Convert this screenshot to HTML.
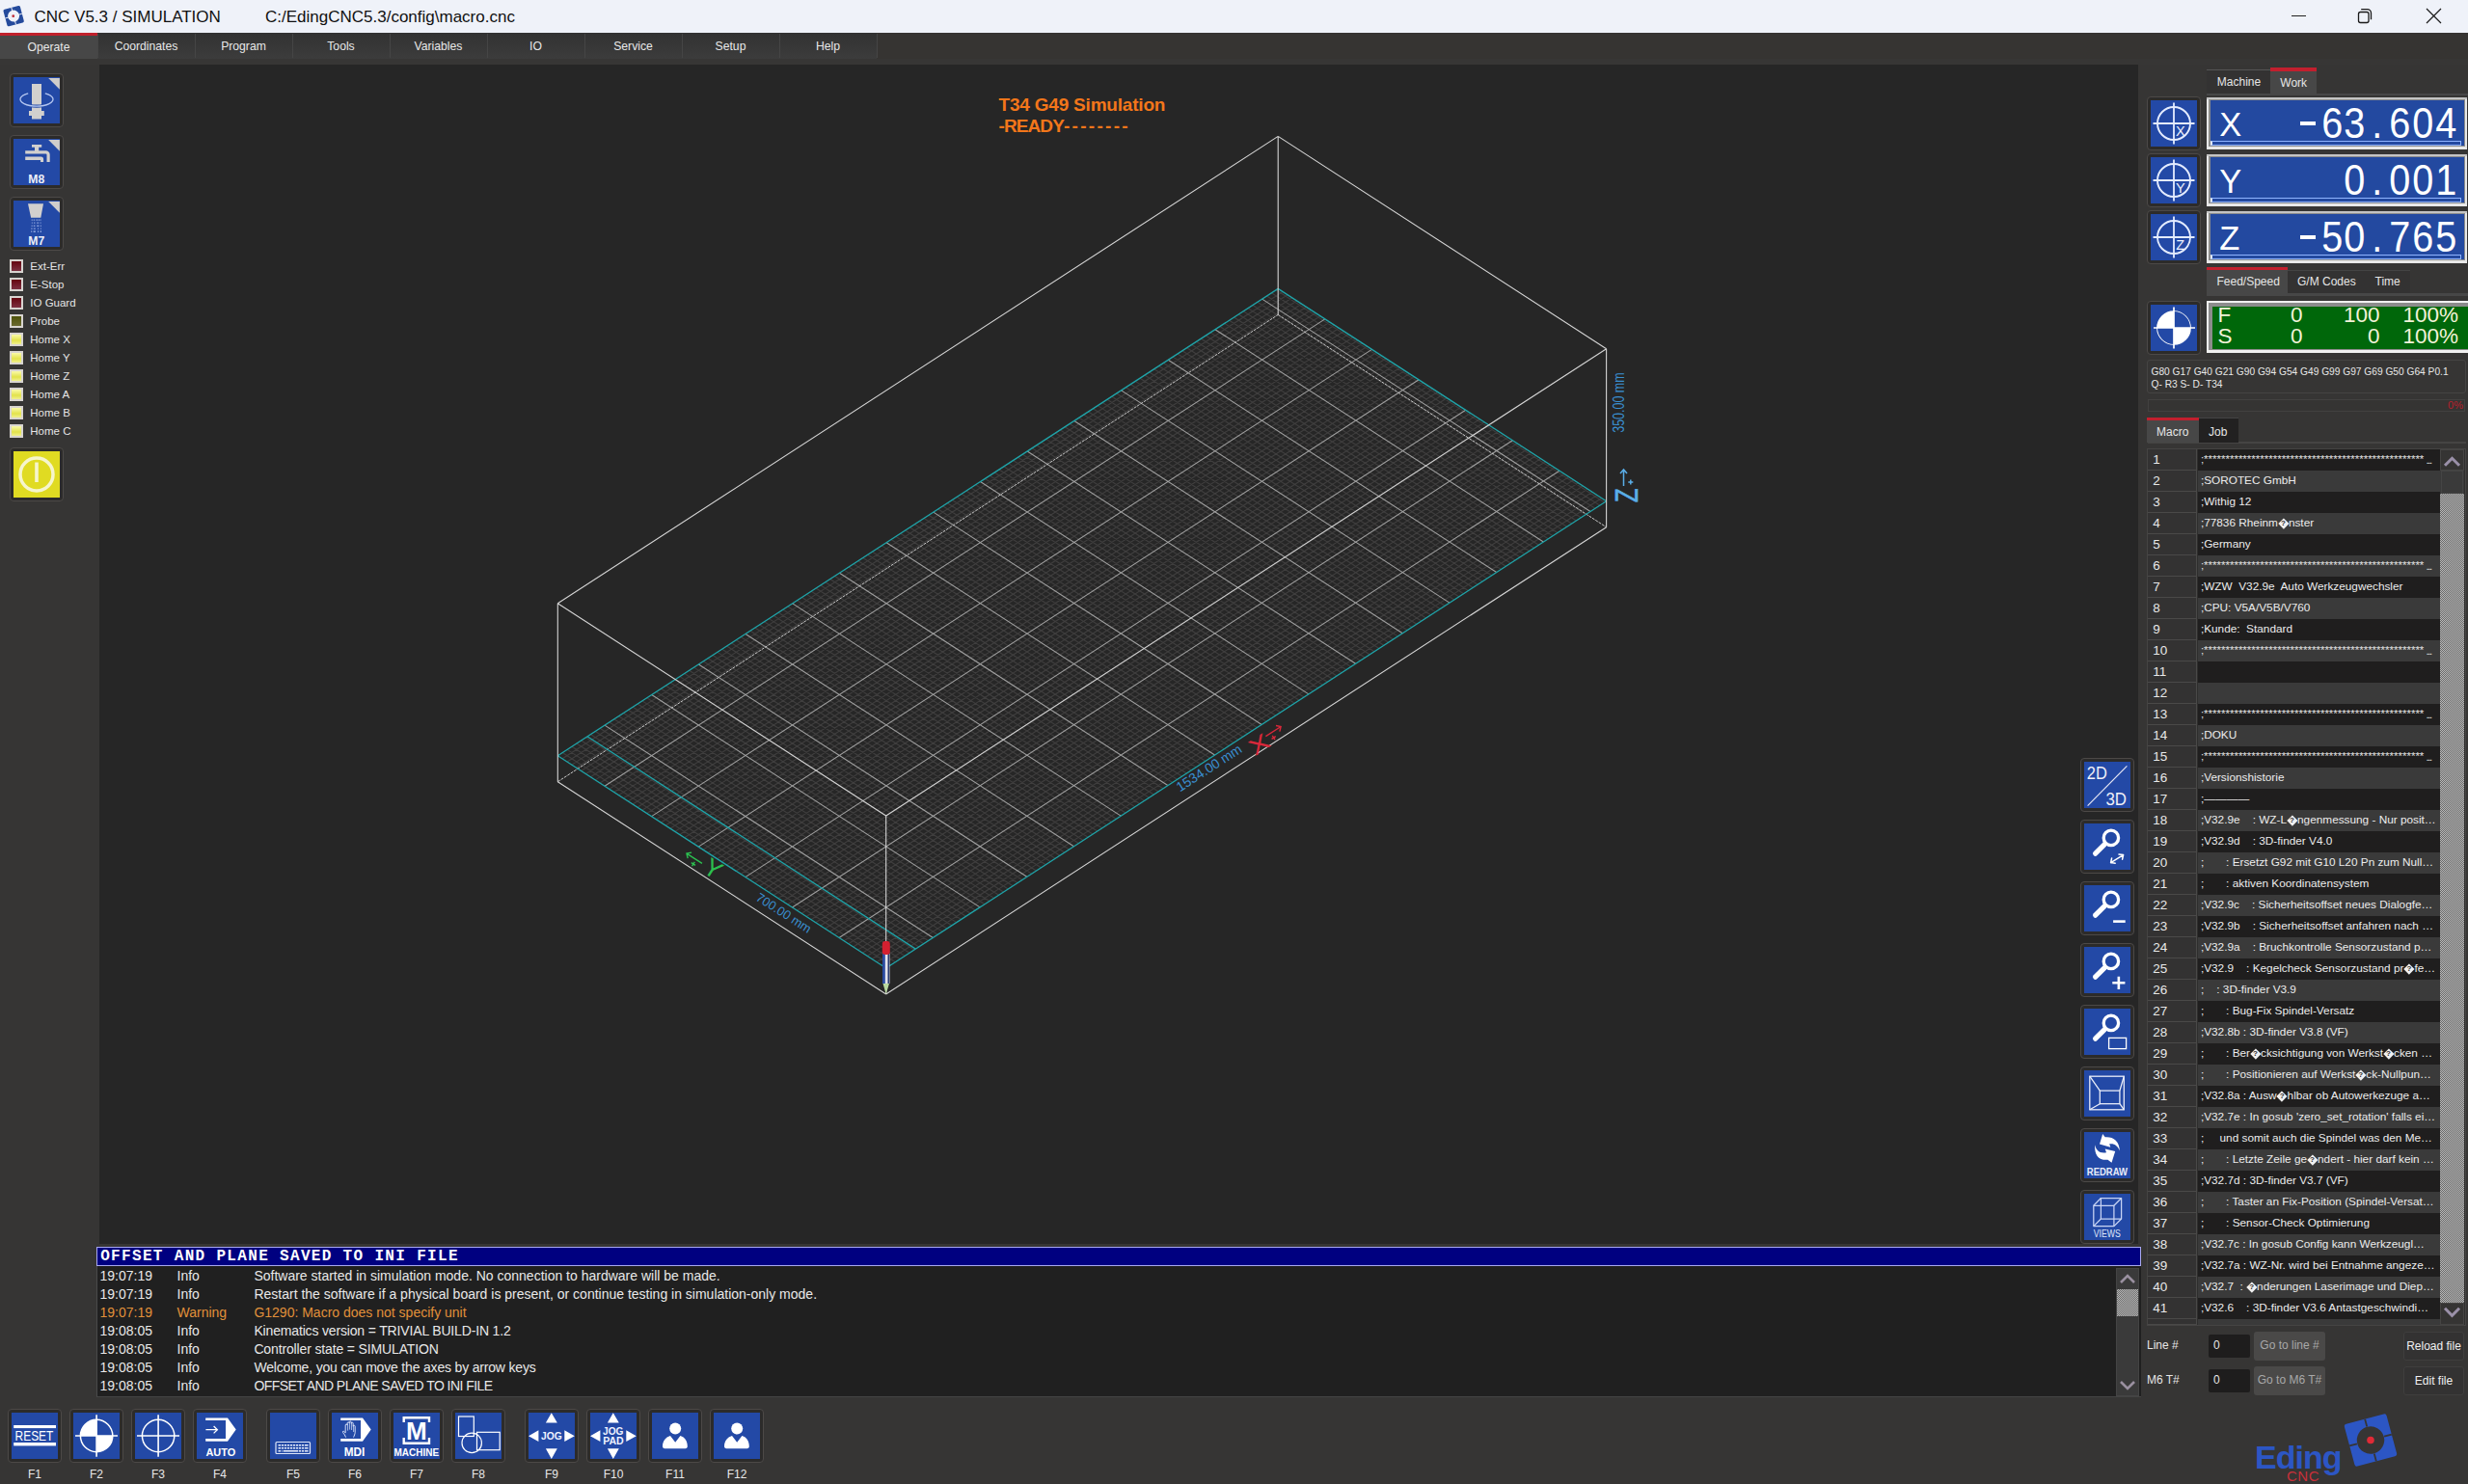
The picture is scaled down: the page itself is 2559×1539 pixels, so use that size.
<!DOCTYPE html><html><head><meta charset="utf-8"><title>CNC</title><style>
*{margin:0;padding:0;box-sizing:border-box}
html,body{width:2559px;height:1539px;overflow:hidden;background:#363534;font-family:"Liberation Sans",sans-serif}
.t{position:absolute;white-space:pre}
.b{position:absolute}
.btn{position:absolute;width:56px;height:56px;border:1px solid #4c4947;border-radius:4px;background:#2c2b2a}
.btn .in{position:absolute;left:3px;top:3px;width:48px;height:48px;background:#2349a6;overflow:hidden}
.btn svg{position:absolute;left:0;top:0}
.q{display:inline-block;position:relative;width:11px;height:10px;vertical-align:1px;color:#2a2a2a;font-size:8px;font-weight:bold;line-height:10px;text-align:center}.q::before{content:"";position:absolute;left:1.6px;top:1.1px;width:7.8px;height:7.8px;background:#f0f0f0;transform:rotate(45deg);z-index:-0}.q b{position:relative}</style></head><body>
<div class="b" style="left:0px;top:61px;width:103px;height:1400px;background:#363534"></div>
<div class="btn" style="left:10px;top:76px"><div class="in" style="background:#2349a6"><svg width="48" height="48" viewBox="0 0 48 48"><path d="M36.2 1.1H47.9V12.8Z" fill="#cfcdcb"/><path d="M19 7.1h10v28h2.8v5H29v3.5H19V40h-3v-5h3z" fill="#d2d0ce"/>
<path d="M15.2 16.8A17 7.2 0 1 0 32.8 16.8" fill="none" stroke="#2349a6" stroke-width="3.2"/>
<path d="M15.2 16.8A17 7.2 0 1 0 32.8 16.8" fill="none" stroke="#b4c6f0" stroke-width="1.3"/></svg></div></div>
<div class="btn" style="left:10px;top:140px"><div class="in" style="background:#2349a6"><svg width="48" height="48" viewBox="0 0 48 48"><path d="M36.2 1.1H47.9V12.8Z" fill="#cfcdcb"/><path d="M19 6h10.2v2.8H26.2V12.2h7.3a4.2 4.2 0 0 1 4.2 4.2V24h-3.2v-7.4a1 1 0 0 0-1-1H12.2v-3.4H22V8.8h-3z" fill="#d2d0ce"/>
<path d="M12.2 18.6h16.2a2.7 2.7 0 0 1 2.7 2.7V24H28v-2h-15.8z" fill="#d2d0ce"/>
<text x="23.8" y="45.8" font-family="Liberation Sans" font-weight="bold" font-size="12.2" fill="#eceef8" text-anchor="middle">M8</text></svg></div></div>
<div class="btn" style="left:10px;top:204px"><div class="in" style="background:#2349a6"><svg width="48" height="48" viewBox="0 0 48 48"><path d="M36.2 1.1H47.9V12.8Z" fill="#cfcdcb"/><path d="M15 3.2h16l-2.7 14.5H18.1z" fill="#d2d0ce"/>
<g fill="#9fb2e6"><rect x="18.6" y="19.6" width="1.2" height="1" /><rect x="20.6" y="19.6" width="1.6" height="1"/><rect x="23.4" y="19.6" width="1.6" height="1"/><rect x="25.6" y="19.6" width="1.6" height="1"/><rect x="27.6" y="19.6" width="1" height="1"/>
<rect x="18.8" y="22.6" width="1" height="1"/><rect x="21" y="22.6" width="1.4" height="1"/><rect x="24.2" y="22.6" width="2" height="1"/><rect x="27.6" y="22.6" width="1" height="1"/>
<rect x="18.6" y="25.6" width="1" height="1.2"/><rect x="20.8" y="25.6" width="1.6" height="1.2"/><rect x="24.2" y="25.6" width="2.2" height="1.2"/><rect x="27.8" y="25.6" width="1" height="1.2"/>
<rect x="18.2" y="28.6" width="1.4" height="1"/><rect x="20.8" y="28.6" width="2" height="1"/><rect x="25" y="28.6" width="1" height="1"/><rect x="27.8" y="28.6" width="1" height="1"/>
<rect x="18.2" y="31.4" width="1" height="1.4"/><rect x="20.6" y="31.4" width="2.2" height="1.4"/><rect x="25" y="31.4" width="1" height="1.4"/><rect x="27.6" y="31.4" width="1.4" height="1.4"/></g>
<text x="23.8" y="45.6" font-family="Liberation Sans" font-weight="bold" font-size="12.2" fill="#eceef8" text-anchor="middle">M7</text></svg></div></div>
<div class="b" style="left:10px;top:269px;width:14px;height:14px;background:linear-gradient(#660610,#7c3040);border:2px solid #d8d4d0"></div>
<div class="t" style="left:31.3px;top:270.9px;font-size:11.5px;line-height:11.5px;color:#e4e4e4;font-weight:normal;font-family:'Liberation Sans', sans-serif;">Ext-Err</div>
<div class="b" style="left:10px;top:288px;width:14px;height:14px;background:linear-gradient(#660610,#7c3040);border:2px solid #d8d4d0"></div>
<div class="t" style="left:31.3px;top:289.9px;font-size:11.5px;line-height:11.5px;color:#e4e4e4;font-weight:normal;font-family:'Liberation Sans', sans-serif;">E-Stop</div>
<div class="b" style="left:10px;top:307px;width:14px;height:14px;background:linear-gradient(#660610,#7c3040);border:2px solid #d8d4d0"></div>
<div class="t" style="left:31.3px;top:308.9px;font-size:11.5px;line-height:11.5px;color:#e4e4e4;font-weight:normal;font-family:'Liberation Sans', sans-serif;">IO Guard</div>
<div class="b" style="left:10px;top:326px;width:14px;height:14px;background:linear-gradient(#4e5208,#6a6830);border:2px solid #d8d4d0"></div>
<div class="t" style="left:31.3px;top:327.9px;font-size:11.5px;line-height:11.5px;color:#e4e4e4;font-weight:normal;font-family:'Liberation Sans', sans-serif;">Probe</div>
<div class="b" style="left:10px;top:345px;width:14px;height:14px;background:linear-gradient(#fafaa8,#e2e24a 60%,#f0f090);border:2px solid #d8d4d0"></div>
<div class="t" style="left:31.3px;top:346.9px;font-size:11.5px;line-height:11.5px;color:#e4e4e4;font-weight:normal;font-family:'Liberation Sans', sans-serif;">Home X</div>
<div class="b" style="left:10px;top:364px;width:14px;height:14px;background:linear-gradient(#fafaa8,#e2e24a 60%,#f0f090);border:2px solid #d8d4d0"></div>
<div class="t" style="left:31.3px;top:365.9px;font-size:11.5px;line-height:11.5px;color:#e4e4e4;font-weight:normal;font-family:'Liberation Sans', sans-serif;">Home Y</div>
<div class="b" style="left:10px;top:383px;width:14px;height:14px;background:linear-gradient(#fafaa8,#e2e24a 60%,#f0f090);border:2px solid #d8d4d0"></div>
<div class="t" style="left:31.3px;top:384.9px;font-size:11.5px;line-height:11.5px;color:#e4e4e4;font-weight:normal;font-family:'Liberation Sans', sans-serif;">Home Z</div>
<div class="b" style="left:10px;top:402px;width:14px;height:14px;background:linear-gradient(#fafaa8,#e2e24a 60%,#f0f090);border:2px solid #d8d4d0"></div>
<div class="t" style="left:31.3px;top:403.9px;font-size:11.5px;line-height:11.5px;color:#e4e4e4;font-weight:normal;font-family:'Liberation Sans', sans-serif;">Home A</div>
<div class="b" style="left:10px;top:421px;width:14px;height:14px;background:linear-gradient(#fafaa8,#e2e24a 60%,#f0f090);border:2px solid #d8d4d0"></div>
<div class="t" style="left:31.3px;top:422.9px;font-size:11.5px;line-height:11.5px;color:#e4e4e4;font-weight:normal;font-family:'Liberation Sans', sans-serif;">Home B</div>
<div class="b" style="left:10px;top:440px;width:14px;height:14px;background:linear-gradient(#fafaa8,#e2e24a 60%,#f0f090);border:2px solid #d8d4d0"></div>
<div class="t" style="left:31.3px;top:441.9px;font-size:11.5px;line-height:11.5px;color:#e4e4e4;font-weight:normal;font-family:'Liberation Sans', sans-serif;">Home C</div>
<div class="btn" style="left:10px;top:464px"><div class="in" style="background:#e0db22">
<svg width="48" height="48" viewBox="0 0 48 48"><circle cx="24" cy="24" r="17" fill="none" stroke="#f6f5cc" stroke-width="3.5"/>
<rect x="22.2" y="11.5" width="3.6" height="20.5" fill="#f6f5cc"/></svg></div></div>
<div class="b" style="left:2217px;top:61px;width:342px;height:1478px;background:#363534"></div>
<div class="b" style="left:2288px;top:97px;width:271px;height:2px;background:#474747"></div>
<div class="b" style="left:2288px;top:72px;width:66px;height:25px;background:#333232;border-top:1px solid #555"></div>
<div class="t" style="left:2298.8px;top:78.6px;font-size:12px;line-height:12px;color:#e6e6e6;font-weight:normal;font-family:'Liberation Sans', sans-serif;">Machine</div>
<div class="b" style="left:2354px;top:74px;width:48px;height:25px;background:#474747"></div>
<div class="b" style="left:2354px;top:70px;width:48px;height:4px;background:#c21f2e"></div>
<div class="t" style="left:2364.3px;top:79.5px;font-size:12px;line-height:12px;color:#e6e6e6;font-weight:normal;font-family:'Liberation Sans', sans-serif;">Work</div>
<div class="btn" style="left:2226px;top:100px"><div class="in" style="background:#2349a6"><svg width="48" height="48" viewBox="0 0 48 48"><circle cx="24" cy="24" r="17" fill="none" stroke="#e4ecff" stroke-width="1.9"/><path d="M24 2.5v43M2.5 24h43" stroke="#e4ecff" stroke-width="1.8"/><text x="30.8" y="37" font-family="Liberation Sans" font-size="14.5" fill="#eef2ff" text-anchor="middle">X</text></svg></div></div>
<div class="b" style="left:2288px;top:101px;width:270px;height:54px;background:#e8e8e8"></div>
<div class="b" style="left:2288px;top:101px;width:270px;height:2px;background:#c4c4c4"></div>
<div class="b" style="left:2290px;top:103px;width:266px;height:49px;background:#8c8c8c"></div>
<div class="b" style="left:2292px;top:104px;width:263px;height:47px;background:#2349a0"></div>
<div class="b" style="left:2292px;top:146px;width:260px;height:5px;border:1px solid #8fb4ff;border-left:2px solid #e0e8ff"></div>
<div class="t" style="left:2301.2px;top:111.5px;font-size:34.5px;line-height:34.5px;color:#ffffff;font-weight:normal;font-family:'Liberation Sans', sans-serif;">X</div>
<div class="b" style="left:2385.0px;top:125.6px;width:16.3px;height:4.2px;background:#fff"></div>
<div class="t" style="left:2405.7px;top:105.9px;font-size:44px;line-height:44px;color:#ffffff;font-weight:normal;font-family:'Liberation Sans', sans-serif;width:23.56px;text-align:center;transform:scaleX(0.9)">6</div>
<div class="t" style="left:2429.3px;top:105.9px;font-size:44px;line-height:44px;color:#ffffff;font-weight:normal;font-family:'Liberation Sans', sans-serif;width:23.56px;text-align:center;transform:scaleX(0.9)">3</div>
<div class="t" style="left:2452.9px;top:105.9px;font-size:44px;line-height:44px;color:#ffffff;font-weight:normal;font-family:'Liberation Sans', sans-serif;width:23.56px;text-align:center;transform:scaleX(0.9)">.</div>
<div class="t" style="left:2476.4px;top:105.9px;font-size:44px;line-height:44px;color:#ffffff;font-weight:normal;font-family:'Liberation Sans', sans-serif;width:23.56px;text-align:center;transform:scaleX(0.9)">6</div>
<div class="t" style="left:2500.0px;top:105.9px;font-size:44px;line-height:44px;color:#ffffff;font-weight:normal;font-family:'Liberation Sans', sans-serif;width:23.56px;text-align:center;transform:scaleX(0.9)">0</div>
<div class="t" style="left:2523.5px;top:105.9px;font-size:44px;line-height:44px;color:#ffffff;font-weight:normal;font-family:'Liberation Sans', sans-serif;width:23.56px;text-align:center;transform:scaleX(0.9)">4</div>
<div class="btn" style="left:2226px;top:159px"><div class="in" style="background:#2349a6"><svg width="48" height="48" viewBox="0 0 48 48"><circle cx="24" cy="24" r="17" fill="none" stroke="#e4ecff" stroke-width="1.9"/><path d="M24 2.5v43M2.5 24h43" stroke="#e4ecff" stroke-width="1.8"/><text x="30.8" y="37" font-family="Liberation Sans" font-size="14.5" fill="#eef2ff" text-anchor="middle">Y</text></svg></div></div>
<div class="b" style="left:2288px;top:160px;width:270px;height:54px;background:#e8e8e8"></div>
<div class="b" style="left:2288px;top:160px;width:270px;height:2px;background:#c4c4c4"></div>
<div class="b" style="left:2290px;top:162px;width:266px;height:49px;background:#8c8c8c"></div>
<div class="b" style="left:2292px;top:163px;width:263px;height:47px;background:#2349a0"></div>
<div class="b" style="left:2292px;top:205px;width:260px;height:5px;border:1px solid #8fb4ff;border-left:2px solid #e0e8ff"></div>
<div class="t" style="left:2301.2px;top:170.5px;font-size:34.5px;line-height:34.5px;color:#ffffff;font-weight:normal;font-family:'Liberation Sans', sans-serif;">Y</div>
<div class="t" style="left:2429.3px;top:164.9px;font-size:44px;line-height:44px;color:#ffffff;font-weight:normal;font-family:'Liberation Sans', sans-serif;width:23.56px;text-align:center;transform:scaleX(0.9)">0</div>
<div class="t" style="left:2452.9px;top:164.9px;font-size:44px;line-height:44px;color:#ffffff;font-weight:normal;font-family:'Liberation Sans', sans-serif;width:23.56px;text-align:center;transform:scaleX(0.9)">.</div>
<div class="t" style="left:2476.4px;top:164.9px;font-size:44px;line-height:44px;color:#ffffff;font-weight:normal;font-family:'Liberation Sans', sans-serif;width:23.56px;text-align:center;transform:scaleX(0.9)">0</div>
<div class="t" style="left:2500.0px;top:164.9px;font-size:44px;line-height:44px;color:#ffffff;font-weight:normal;font-family:'Liberation Sans', sans-serif;width:23.56px;text-align:center;transform:scaleX(0.9)">0</div>
<div class="t" style="left:2523.5px;top:164.9px;font-size:44px;line-height:44px;color:#ffffff;font-weight:normal;font-family:'Liberation Sans', sans-serif;width:23.56px;text-align:center;transform:scaleX(0.9)">1</div>
<div class="btn" style="left:2226px;top:218px"><div class="in" style="background:#2349a6"><svg width="48" height="48" viewBox="0 0 48 48"><circle cx="24" cy="24" r="17" fill="none" stroke="#e4ecff" stroke-width="1.9"/><path d="M24 2.5v43M2.5 24h43" stroke="#e4ecff" stroke-width="1.8"/><text x="30.8" y="37" font-family="Liberation Sans" font-size="14.5" fill="#eef2ff" text-anchor="middle">Z</text></svg></div></div>
<div class="b" style="left:2288px;top:219px;width:270px;height:54px;background:#e8e8e8"></div>
<div class="b" style="left:2288px;top:219px;width:270px;height:2px;background:#c4c4c4"></div>
<div class="b" style="left:2290px;top:221px;width:266px;height:49px;background:#8c8c8c"></div>
<div class="b" style="left:2292px;top:222px;width:263px;height:47px;background:#2349a0"></div>
<div class="b" style="left:2292px;top:264px;width:260px;height:5px;border:1px solid #8fb4ff;border-left:2px solid #e0e8ff"></div>
<div class="t" style="left:2301.2px;top:229.5px;font-size:34.5px;line-height:34.5px;color:#ffffff;font-weight:normal;font-family:'Liberation Sans', sans-serif;">Z</div>
<div class="b" style="left:2385.0px;top:243.6px;width:16.3px;height:4.2px;background:#fff"></div>
<div class="t" style="left:2405.7px;top:223.9px;font-size:44px;line-height:44px;color:#ffffff;font-weight:normal;font-family:'Liberation Sans', sans-serif;width:23.56px;text-align:center;transform:scaleX(0.9)">5</div>
<div class="t" style="left:2429.3px;top:223.9px;font-size:44px;line-height:44px;color:#ffffff;font-weight:normal;font-family:'Liberation Sans', sans-serif;width:23.56px;text-align:center;transform:scaleX(0.9)">0</div>
<div class="t" style="left:2452.9px;top:223.9px;font-size:44px;line-height:44px;color:#ffffff;font-weight:normal;font-family:'Liberation Sans', sans-serif;width:23.56px;text-align:center;transform:scaleX(0.9)">.</div>
<div class="t" style="left:2476.4px;top:223.9px;font-size:44px;line-height:44px;color:#ffffff;font-weight:normal;font-family:'Liberation Sans', sans-serif;width:23.56px;text-align:center;transform:scaleX(0.9)">7</div>
<div class="t" style="left:2500.0px;top:223.9px;font-size:44px;line-height:44px;color:#ffffff;font-weight:normal;font-family:'Liberation Sans', sans-serif;width:23.56px;text-align:center;transform:scaleX(0.9)">6</div>
<div class="t" style="left:2523.5px;top:223.9px;font-size:44px;line-height:44px;color:#ffffff;font-weight:normal;font-family:'Liberation Sans', sans-serif;width:23.56px;text-align:center;transform:scaleX(0.9)">5</div>
<div class="b" style="left:2288px;top:304px;width:271px;height:3px;background:#474747"></div>
<div class="b" style="left:2372px;top:280px;width:127px;height:24px;background:#333232;border-top:1px solid #444"></div>
<div class="b" style="left:2288px;top:280px;width:84px;height:26px;background:#474747"></div>
<div class="b" style="left:2288px;top:276.5px;width:84px;height:3.5px;background:#c21f2e"></div>
<div class="t" style="left:2298.5px;top:286.4px;font-size:12px;line-height:12px;color:#e6e6e6;font-weight:normal;font-family:'Liberation Sans', sans-serif;">Feed/Speed</div>
<div class="t" style="left:2382.0px;top:285.9px;font-size:12px;line-height:12px;color:#e6e6e6;font-weight:normal;font-family:'Liberation Sans', sans-serif;">G/M Codes</div>
<div class="t" style="left:2462.5px;top:285.9px;font-size:12px;line-height:12px;color:#e6e6e6;font-weight:normal;font-family:'Liberation Sans', sans-serif;">Time</div>
<div class="btn" style="left:2226px;top:312px"><div class="in" style="background:#2349a6"><svg width="48" height="48" viewBox="0 0 48 48"><circle cx="24" cy="24" r="17" fill="#fff" stroke="#fff" stroke-width="1.7"/>
<path d="M24 24H41A17 17 0 0 0 24 7Z" fill="#2349a6"/><path d="M24 24H7A17 17 0 0 0 24 41Z" fill="#2349a6"/>
<path d="M24 2.5v43M3 24h43" stroke="#fff" stroke-width="1.7"/></svg></div></div>
<div class="b" style="left:2288px;top:312px;width:271px;height:54px;background:#f0f0f0"></div>
<div class="b" style="left:2290px;top:314px;width:269px;height:49px;background:#8c8c8c"></div>
<div class="b" style="left:2294px;top:318px;width:265px;height:44px;background:#00670a"></div>
<div class="t" style="left:2299.6px;top:316.4px;font-size:22.5px;line-height:22.5px;color:#f2f2d8;font-weight:normal;font-family:'Liberation Sans', sans-serif;">F</div>
<div class="t" style="left:2287.6px;top:316.4px;font-size:22.5px;line-height:22.5px;color:#f2f2d8;font-weight:normal;font-family:'Liberation Sans', sans-serif;width:100px;text-align:right">0</div>
<div class="t" style="left:2367.6px;top:316.4px;font-size:22.5px;line-height:22.5px;color:#f2f2d8;font-weight:normal;font-family:'Liberation Sans', sans-serif;width:100px;text-align:right">100</div>
<div class="t" style="left:2449.0px;top:316.4px;font-size:22.5px;line-height:22.5px;color:#f2f2d8;font-weight:normal;font-family:'Liberation Sans', sans-serif;width:100px;text-align:right">100%</div>
<div class="t" style="left:2299.6px;top:338.0px;font-size:22.5px;line-height:22.5px;color:#f2f2d8;font-weight:normal;font-family:'Liberation Sans', sans-serif;">S</div>
<div class="t" style="left:2287.6px;top:338.0px;font-size:22.5px;line-height:22.5px;color:#f2f2d8;font-weight:normal;font-family:'Liberation Sans', sans-serif;width:100px;text-align:right">0</div>
<div class="t" style="left:2367.6px;top:338.0px;font-size:22.5px;line-height:22.5px;color:#f2f2d8;font-weight:normal;font-family:'Liberation Sans', sans-serif;width:100px;text-align:right">0</div>
<div class="t" style="left:2449.0px;top:338.0px;font-size:22.5px;line-height:22.5px;color:#f2f2d8;font-weight:normal;font-family:'Liberation Sans', sans-serif;width:100px;text-align:right">100%</div>
<div class="b" style="left:2226px;top:373px;width:331px;height:35px;border:1px solid #454443;border-radius:3px"></div>
<div class="t" style="left:2230.5px;top:381.2px;font-size:10.2px;line-height:10.2px;color:#e8e8e8;font-weight:normal;font-family:'Liberation Sans', sans-serif;">G80 G17 G40 G21 G90 G94 G54 G49 G99 G97 G69 G50 G64 P0.1</div>
<div class="t" style="left:2230.5px;top:394.2px;font-size:10.2px;line-height:10.2px;color:#e8e8e8;font-weight:normal;font-family:'Liberation Sans', sans-serif;">Q- R3 S- D- T34</div>
<div class="b" style="left:2227px;top:414px;width:329px;height:13px;border:1px solid #424140;background:#353433"></div>
<div class="t" style="left:2454.0px;top:414.6px;font-size:11px;line-height:11px;color:#b8202c;font-weight:normal;font-family:'Liberation Sans', sans-serif;width:100px;text-align:right">0%</div>
<div class="b" style="left:2227px;top:458px;width:330px;height:2px;background:#454443"></div>
<div class="b" style="left:2226px;top:436px;width:54px;height:23px;background:#474747"></div>
<div class="b" style="left:2226px;top:432.5px;width:54px;height:3.5px;background:#c21f2e"></div>
<div class="b" style="left:2280px;top:433px;width:41px;height:26px;background:#222121;border-top:1px solid #444"></div>
<div class="t" style="left:2236.0px;top:441.9px;font-size:12px;line-height:12px;color:#e6e6e6;font-weight:normal;font-family:'Liberation Sans', sans-serif;">Macro</div>
<div class="t" style="left:2290.0px;top:441.7px;font-size:12px;line-height:12px;color:#e6e6e6;font-weight:normal;font-family:'Liberation Sans', sans-serif;">Job</div>
<div class="b" style="left:103px;top:67px;width:2114px;height:1223px;background:#262626"></div>
<svg class="b" style="left:103px;top:67px" width="2114" height="1223" viewBox="103 67 2114 1223">
<path d="M923.57 1000.84L583.17 780.54M928.44 997.69L588.04 777.39M933.31 994.53L592.91 774.23M938.18 991.37L597.78 771.07M943.04 988.21L602.64 767.91M947.91 985.06L607.51 764.76M952.78 981.90L612.38 761.60M957.65 978.74L617.25 758.44M962.52 975.59L622.12 755.29M972.26 969.27L631.86 748.97M977.13 966.11L636.73 745.81M982.00 962.96L641.60 742.66M986.87 959.80L646.47 739.50M991.73 956.64L651.33 736.34M996.60 953.49L656.20 733.19M1001.47 950.33L661.07 730.03M1006.34 947.17L665.94 726.87M1011.21 944.01L670.81 723.71M1020.95 937.70L680.55 717.40M1025.82 934.54L685.42 714.24M1030.69 931.39L690.29 711.09M1035.56 928.23L695.16 707.93M1040.42 925.07L700.02 704.77M1045.29 921.92L704.89 701.62M1050.16 918.76L709.76 698.46M1055.03 915.60L714.63 695.30M1059.90 912.44L719.50 692.14M1069.64 906.13L729.24 685.83M1074.51 902.97L734.11 682.67M1079.38 899.82L738.98 679.52M1084.24 896.66L743.84 676.36M1089.11 893.50L748.71 673.20M1093.98 890.34L753.58 670.04M1098.85 887.19L758.45 666.89M1103.72 884.03L763.32 663.73M1108.59 880.87L768.19 660.57M1118.33 874.56L777.93 654.26M1123.20 871.40L782.80 651.10M1128.07 868.24L787.67 647.94M1132.93 865.09L792.53 644.79M1137.80 861.93L797.40 641.63M1142.67 858.77L802.27 638.47M1147.54 855.62L807.14 635.32M1152.41 852.46L812.01 632.16M1157.28 849.30L816.88 629.00M1167.02 842.99L826.62 622.69M1171.89 839.83L831.49 619.53M1176.76 836.67L836.36 616.37M1181.62 833.52L841.22 613.22M1186.49 830.36L846.09 610.06M1191.36 827.20L850.96 606.90M1196.23 824.04L855.83 603.74M1201.10 820.89L860.70 600.59M1205.97 817.73L865.57 597.43M1215.71 811.42L875.31 591.12M1220.58 808.26L880.18 587.96M1225.45 805.10L885.05 584.80M1230.31 801.95L889.91 581.65M1235.18 798.79L894.78 578.49M1240.05 795.63L899.65 575.33M1244.92 792.47L904.52 572.17M1249.79 789.32L909.39 569.02M1254.66 786.16L914.26 565.86M1264.40 779.85L924.00 559.55M1269.27 776.69L928.87 556.39M1274.13 773.53L933.73 553.23M1279.00 770.37L938.60 550.07M1283.87 767.22L943.47 546.92M1288.74 764.06L948.34 543.76M1293.61 760.90L953.21 540.60M1298.48 757.75L958.08 537.45M1303.35 754.59L962.95 534.29M1313.09 748.27L972.69 527.97M1317.96 745.12L977.56 524.82M1322.82 741.96L982.42 521.66M1327.69 738.80L987.29 518.50M1332.56 735.65L992.16 515.35M1337.43 732.49L997.03 512.19M1342.30 729.33L1001.90 509.03M1347.17 726.17L1006.77 505.87M1352.04 723.02L1011.64 502.72M1361.78 716.70L1021.38 496.40M1366.65 713.55L1026.25 493.25M1371.51 710.39L1031.11 490.09M1376.38 707.23L1035.98 486.93M1381.25 704.07L1040.85 483.77M1386.12 700.92L1045.72 480.62M1390.99 697.76L1050.59 477.46M1395.86 694.60L1055.46 474.30M1400.73 691.45L1060.33 471.15M1410.47 685.13L1070.07 464.83M1415.33 681.98L1074.93 461.68M1420.20 678.82L1079.80 458.52M1425.07 675.66L1084.67 455.36M1429.94 672.50L1089.54 452.20M1434.81 669.35L1094.41 449.05M1439.68 666.19L1099.28 445.89M1444.55 663.03L1104.15 442.73M1449.42 659.88L1109.02 439.58M1459.16 653.56L1118.76 433.26M1464.02 650.40L1123.62 430.10M1468.89 647.25L1128.49 426.95M1473.76 644.09L1133.36 423.79M1478.63 640.93L1138.23 420.63M1483.50 637.78L1143.10 417.48M1488.37 634.62L1147.97 414.32M1493.24 631.46L1152.84 411.16M1498.11 628.30L1157.71 408.00M1507.85 621.99L1167.45 401.69M1512.71 618.83L1172.31 398.53M1517.58 615.68L1177.18 395.38M1522.45 612.52L1182.05 392.22M1527.32 609.36L1186.92 389.06M1532.19 606.20L1191.79 385.90M1537.06 603.05L1196.66 382.75M1541.93 599.89L1201.53 379.59M1546.80 596.73L1206.40 376.43M1556.54 590.42L1216.14 370.12M1561.40 587.26L1221.00 366.96M1566.27 584.10L1225.87 363.80M1571.14 580.95L1230.74 360.65M1576.01 577.79L1235.61 357.49M1580.88 574.63L1240.48 354.33M1585.75 571.48L1245.35 351.18M1590.62 568.32L1250.22 348.02M1595.49 565.16L1255.09 344.86M1605.22 558.85L1264.82 338.55M1610.09 555.69L1269.69 335.39M1614.96 552.53L1274.56 332.23M1619.83 549.38L1279.43 329.08M1624.70 546.22L1284.30 325.92M1629.57 543.06L1289.17 322.76M1634.44 539.91L1294.04 319.61M1639.31 536.75L1298.91 316.45M1644.18 533.59L1303.78 313.29M1653.91 527.28L1313.51 306.98M1658.78 524.12L1318.38 303.82M1663.65 520.96L1323.25 300.66M913.84 1000.85L1660.74 516.55M908.97 997.71L1655.87 513.41M904.11 994.56L1651.01 510.26M899.25 991.41L1646.15 507.11M894.39 988.26L1641.29 503.96M889.52 985.12L1636.42 500.82M884.66 981.97L1631.56 497.67M879.80 978.82L1626.70 494.52M874.93 975.68L1621.83 491.38M865.21 969.38L1612.11 485.08M860.35 966.23L1607.25 481.93M855.48 963.09L1602.38 478.79M850.62 959.94L1597.52 475.64M845.76 956.79L1592.66 472.49M840.89 953.65L1587.79 469.35M836.03 950.50L1582.93 466.20M831.17 947.35L1578.07 463.05M826.31 944.20L1573.21 459.90M816.58 937.91L1563.48 453.61M811.72 934.76L1558.62 450.46M806.85 931.62L1553.75 447.32M801.99 928.47L1548.89 444.17M797.13 925.32L1544.03 441.02M792.27 922.17L1539.17 437.87M787.40 919.03L1534.30 434.73M782.54 915.88L1529.44 431.58M777.68 912.73L1524.58 428.43M767.95 906.44L1514.85 422.14M763.09 903.29L1509.99 418.99M758.23 900.14L1505.13 415.84M753.36 897.00L1500.26 412.70M748.50 893.85L1495.40 409.55M743.64 890.70L1490.54 406.40M738.77 887.56L1485.67 403.26M733.91 884.41L1480.81 400.11M729.05 881.26L1475.95 396.96M719.32 874.97L1466.22 390.67M714.46 871.82L1461.36 387.52M709.60 868.67L1456.50 384.37M704.73 865.53L1451.63 381.23M699.87 862.38L1446.77 378.08M695.01 859.23L1441.91 374.93M690.15 856.08L1437.05 371.78M685.28 852.94L1432.18 368.64M680.42 849.79L1427.32 365.49M670.69 843.50L1417.59 359.20M665.83 840.35L1412.73 356.05M660.97 837.20L1407.87 352.90M656.11 834.05L1403.01 349.75M651.24 830.91L1398.14 346.61M646.38 827.76L1393.28 343.46M641.52 824.61L1388.42 340.31M636.65 821.47L1383.55 337.17M631.79 818.32L1378.69 334.02M622.07 812.02L1368.97 327.72M617.20 808.88L1364.10 324.58M612.34 805.73L1359.24 321.43M607.48 802.58L1354.38 318.28M602.61 799.44L1349.51 315.14M597.75 796.29L1344.65 311.99M592.89 793.14L1339.79 308.84M588.03 789.99L1334.93 305.69M583.16 786.85L1330.06 302.55" stroke="#3f3e3e" stroke-width="1.15" fill="none"/>
<path d="M967.39 972.43L626.99 752.13M1016.08 940.86L675.68 720.56M1064.77 909.29L724.37 688.99M1113.46 877.72L773.06 657.42M1162.15 846.14L821.75 625.84M1210.84 814.57L870.44 594.27M1259.53 783.00L919.13 562.70M1308.22 751.43L967.82 531.13M1356.91 719.86L1016.51 499.56M1405.60 688.29L1065.20 467.99M1454.29 656.72L1113.89 436.42M1502.98 625.15L1162.58 404.85M1551.67 593.58L1211.27 373.28M1600.36 562.01L1259.96 341.71M1649.05 530.43L1308.65 310.13M870.07 972.53L1616.97 488.23M821.44 941.06L1568.34 456.76M772.81 909.59L1519.71 425.29M724.19 878.11L1471.09 393.81M675.56 846.64L1422.46 362.34M626.93 815.17L1373.83 330.87" stroke="#9e9e9e" stroke-width="1.1" fill="none"/>
<path d="M578.30 810.70L1325.20 326.40M1325.20 326.40L1665.60 546.70" stroke="#c8c8c8" stroke-width="1" fill="none" stroke-dasharray="3 1"/>
<path d="M918.70 1004.00L1665.60 519.70M1665.60 519.70L1325.20 299.40M1325.20 299.40L578.30 783.70M578.30 783.70L918.70 1004.00M949.37 984.11L608.97 763.81" stroke="#1fa3a8" stroke-width="1.3" fill="none"/>
<path d="M578.30 625.70L1325.20 141.40M1325.20 141.40L1665.60 361.70M1665.60 361.70L918.70 846.00M918.70 846.00L578.30 625.70M578.30 625.70L578.30 810.70M1665.60 361.70L1665.60 546.70M918.70 846.00L918.70 1031.00M1325.20 141.40L1325.20 326.40M578.30 810.70L918.70 1031.00M918.70 1031.00L1665.60 546.70" stroke="#d4d4d4" stroke-width="1.1" fill="none"/>
<g font-family="Liberation Sans" fill="#3a8fd0">
<text x="0" y="0" font-size="13" transform="translate(1684.3 448.8) rotate(-90) scale(0.96 1.3)">350.00 mm</text>
<text x="0" y="0" font-size="14" transform="translate(1223.5 821.5) rotate(-32.8)">1534.00 mm</text>
<text x="0" y="0" font-size="13" transform="translate(783 933) rotate(32.7)">700.00 mm</text>
</g>
<g transform="translate(1697.5 521) rotate(-90) scale(0.72 1)"><text x="0" y="0" font-family="Liberation Sans" font-size="33" fill="#5aaee8" stroke="#5aaee8" stroke-width="0.6">Z</text></g>
<path d="M1683.5 504V487.5M1680 491L1683.5 487L1687 491M1688.3 500h5M1690.8 497.5v5" stroke="#5aaee8" stroke-width="1.5" fill="none"/>
<g transform="translate(1302.8 782.9) rotate(-32.8)"><text x="0" y="0" font-family="Liberation Sans" font-size="26" fill="#d8283a" transform="translate(-2 0.3) scale(1.2 0.9)">X</text><path d="M18.5 -11h18.7M33.4 -14.6l3.8 3.6-3.8 3.6M22.2 -5.4h5M24.7 -7.9v5" stroke="#d8283a" stroke-width="1.4" fill="none"/></g>
<g transform="translate(727.3 903.7) rotate(32.7)"><text x="0" y="0" font-family="Liberation Sans" font-size="26" fill="#2cc050">Y</text><path d="M-4 -7.4h-19M-19.2 -11l-3.8 3.6 3.8 3.6M-13.7 -1.9h5M-11.2 -4.4v5" stroke="#2cc050" stroke-width="1.4" fill="none"/></g>
<rect x="915" y="989" width="7.5" height="31" fill="#e4e4ec"/><rect x="915" y="989" width="2.8" height="31" fill="#2a4aa0"/><rect x="920.5" y="989" width="1.6" height="31" fill="#2a3a70"/><path d="M915.5 1020h6.5l-3.3 11z" fill="#b8d8a0"/><rect x="914.8" y="976" width="8" height="14" rx="3" fill="#d42030"/>
</svg>
<div class="t" style="left:1035.5px;top:98.5px;font-size:19px;line-height:19px;color:#f3761a;font-weight:bold;font-family:'Liberation Sans', sans-serif;letter-spacing:-0.2px">T34 G49 Simulation</div>
<div class="t" style="left:1035.5px;top:120.5px;font-size:19px;line-height:19px;color:#f3761a;font-weight:bold;font-family:'Liberation Sans', sans-serif;"><span style="letter-spacing:-0.9px">-READY</span><span style="letter-spacing:2.3px">--------</span></div>
<div class="btn" style="left:2157px;top:786px"><div class="in" style="background:#2349a6"><svg width="48" height="48" viewBox="0 0 48 48"><text x="2.8" y="18" font-family="Liberation Sans" font-size="18" fill="#f0f0f8" textLength="21" lengthAdjust="spacingAndGlyphs">2D</text>
<text x="22.4" y="45" font-family="Liberation Sans" font-size="18" fill="#f0f0f8" textLength="21.5" lengthAdjust="spacingAndGlyphs">3D</text>
<path d="M44.4 4.4L3.6 45.6" stroke="#e8e8f4" stroke-width="1.2"/></svg></div></div>
<div class="btn" style="left:2157px;top:850px"><div class="in" style="background:#2349a6"><svg width="48" height="48" viewBox="0 0 48 48"><circle cx="27.9" cy="14.9" r="7.7" fill="none" stroke="#fff" stroke-width="3.3"/><path d="M21.2 21.6L11.6 31.2" stroke="#fff" stroke-width="5.2" stroke-linecap="round"/><path d="M27.6 40.6L40.6 32.6M27.6 40.6l1-4.6M27.6 40.6l4.6.6M40.6 32.6l-4.6-.6M40.6 32.6l-1 4.6" stroke="#fff" stroke-width="1.5" fill="none" stroke-linecap="round"/></svg></div></div>
<div class="btn" style="left:2157px;top:914px"><div class="in" style="background:#2349a6"><svg width="48" height="48" viewBox="0 0 48 48"><circle cx="27.9" cy="14.9" r="7.7" fill="none" stroke="#fff" stroke-width="3.3"/><path d="M21.2 21.6L11.6 31.2" stroke="#fff" stroke-width="5.2" stroke-linecap="round"/><path d="M30.1 37.6h12.6" stroke="#fff" stroke-width="2.6"/></svg></div></div>
<div class="btn" style="left:2157px;top:978px"><div class="in" style="background:#2349a6"><svg width="48" height="48" viewBox="0 0 48 48"><circle cx="27.9" cy="14.9" r="7.7" fill="none" stroke="#fff" stroke-width="3.3"/><path d="M21.2 21.6L11.6 31.2" stroke="#fff" stroke-width="5.2" stroke-linecap="round"/><path d="M29.3 37.3h13.1M35.85 30.75v13.15" stroke="#fff" stroke-width="2.6"/></svg></div></div>
<div class="btn" style="left:2157px;top:1042px"><div class="in" style="background:#2349a6"><svg width="48" height="48" viewBox="0 0 48 48"><circle cx="27.9" cy="14.9" r="7.7" fill="none" stroke="#fff" stroke-width="3.3"/><path d="M21.2 21.6L11.6 31.2" stroke="#fff" stroke-width="5.2" stroke-linecap="round"/><rect x="25.6" y="30.4" width="18" height="11.2" fill="none" stroke="#fff" stroke-width="1.3"/></svg></div></div>
<div class="btn" style="left:2157px;top:1106px"><div class="in" style="background:#2349a6"><svg width="48" height="48" viewBox="0 0 48 48"><g stroke="#e8ecf8" stroke-width="1.3" fill="none"><rect x="5.8" y="6.2" width="35.5" height="34.6"/>
<rect x="16.3" y="21.1" width="20.6" height="13.6"/><path d="M5.8 6.2L16.3 21.1M41.3 6.2L36.9 21.1M5.8 40.8L16.3 34.7M41.3 40.8L36.9 34.7"/></g></svg></div></div>
<div class="btn" style="left:2157px;top:1170px"><div class="in" style="background:#2349a6"><svg width="48" height="48" viewBox="0 0 48 48"><path d="M19.2 1.9L21.7 5.2C30 4.5 36.5 9 36.9 19.6C35 14 31 11.5 26.2 12.3L27.3 15.85L16 12.6Z" fill="#fff"/>
<path d="M11.1 13.2C10.5 24 15 29.5 24.5 28.8L28.5 31.7L32.2 20L21.7 17.6L23 21.2C16 22.5 12.5 19 11.1 13.2Z" fill="#fff"/>
<text x="2.8" y="44.5" font-family="Liberation Sans" font-weight="bold" font-size="11.3" fill="#e8ecf8" textLength="42.2" lengthAdjust="spacingAndGlyphs">REDRAW</text></svg></div></div>
<div class="btn" style="left:2157px;top:1234px"><div class="in" style="background:#2349a6"><svg width="48" height="48" viewBox="0 0 48 48"><g stroke="#c8d4f4" stroke-width="1.25" fill="none" stroke-linejoin="round"><path d="M9.8 12.3H30.9V33.6H9.8Z"/>
<path d="M17.4 4.5H38.6V26H17.4Z"/><path d="M9.8 12.3L17.4 4.5M30.9 12.3L38.6 4.5M9.8 33.6L17.4 26M30.9 33.6L38.6 26"/></g>
<text x="9.8" y="44.7" font-family="Liberation Sans" font-size="10" fill="#dfe6fa" textLength="28.1" lengthAdjust="spacingAndGlyphs">VIEWS</text></svg></div></div>
<div class="b" style="left:100px;top:1292.5px;width:2120px;height:20.5px;background:#000080;border:1px solid #a8a8f0"></div>
<div class="t" style="left:104.2px;top:1295.4px;font-size:16px;line-height:16px;color:#ffffff;font-weight:bold;font-family:'Liberation Mono', monospace;letter-spacing:1.33px">OFFSET AND PLANE SAVED TO INI FILE</div>
<div class="b" style="left:100px;top:1313px;width:2120px;height:136px;background:#202020;border-left:1px solid #4a4a4a;border-bottom:1px solid #444"></div>
<div class="t" style="left:103.5px;top:1316.2px;font-size:14px;line-height:14px;color:#e8e8e8;font-weight:normal;font-family:'Liberation Sans', sans-serif;">19:07:19</div>
<div class="t" style="left:183.5px;top:1316.2px;font-size:14px;line-height:14px;color:#e8e8e8;font-weight:normal;font-family:'Liberation Sans', sans-serif;">Info</div>
<div class="t" style="left:263.4px;top:1316.2px;font-size:14px;line-height:14px;color:#e8e8e8;font-weight:normal;font-family:'Liberation Sans', sans-serif;letter-spacing:0px">Software started in simulation mode. No connection to hardware will be made.</div>
<div class="t" style="left:103.5px;top:1335.2px;font-size:14px;line-height:14px;color:#e8e8e8;font-weight:normal;font-family:'Liberation Sans', sans-serif;">19:07:19</div>
<div class="t" style="left:183.5px;top:1335.2px;font-size:14px;line-height:14px;color:#e8e8e8;font-weight:normal;font-family:'Liberation Sans', sans-serif;">Info</div>
<div class="t" style="left:263.4px;top:1335.2px;font-size:14px;line-height:14px;color:#e8e8e8;font-weight:normal;font-family:'Liberation Sans', sans-serif;letter-spacing:0px">Restart the software if a physical board is present, or continue testing in simulation-only mode.</div>
<div class="t" style="left:103.5px;top:1354.2px;font-size:14px;line-height:14px;color:#e0903a;font-weight:normal;font-family:'Liberation Sans', sans-serif;">19:07:19</div>
<div class="t" style="left:183.5px;top:1354.2px;font-size:14px;line-height:14px;color:#e0903a;font-weight:normal;font-family:'Liberation Sans', sans-serif;">Warning</div>
<div class="t" style="left:263.4px;top:1354.2px;font-size:14px;line-height:14px;color:#e0903a;font-weight:normal;font-family:'Liberation Sans', sans-serif;letter-spacing:0px">G1290: Macro does not specify unit</div>
<div class="t" style="left:103.5px;top:1373.2px;font-size:14px;line-height:14px;color:#e8e8e8;font-weight:normal;font-family:'Liberation Sans', sans-serif;">19:08:05</div>
<div class="t" style="left:183.5px;top:1373.2px;font-size:14px;line-height:14px;color:#e8e8e8;font-weight:normal;font-family:'Liberation Sans', sans-serif;">Info</div>
<div class="t" style="left:263.4px;top:1373.2px;font-size:14px;line-height:14px;color:#e8e8e8;font-weight:normal;font-family:'Liberation Sans', sans-serif;letter-spacing:-0.16px">Kinematics version = TRIVIAL BUILD-IN 1.2</div>
<div class="t" style="left:103.5px;top:1392.2px;font-size:14px;line-height:14px;color:#e8e8e8;font-weight:normal;font-family:'Liberation Sans', sans-serif;">19:08:05</div>
<div class="t" style="left:183.5px;top:1392.2px;font-size:14px;line-height:14px;color:#e8e8e8;font-weight:normal;font-family:'Liberation Sans', sans-serif;">Info</div>
<div class="t" style="left:263.4px;top:1392.2px;font-size:14px;line-height:14px;color:#e8e8e8;font-weight:normal;font-family:'Liberation Sans', sans-serif;letter-spacing:-0.14px">Controller state = SIMULATION</div>
<div class="t" style="left:103.5px;top:1411.2px;font-size:14px;line-height:14px;color:#e8e8e8;font-weight:normal;font-family:'Liberation Sans', sans-serif;">19:08:05</div>
<div class="t" style="left:183.5px;top:1411.2px;font-size:14px;line-height:14px;color:#e8e8e8;font-weight:normal;font-family:'Liberation Sans', sans-serif;">Info</div>
<div class="t" style="left:263.4px;top:1411.2px;font-size:14px;line-height:14px;color:#e8e8e8;font-weight:normal;font-family:'Liberation Sans', sans-serif;letter-spacing:-0.18px">Welcome, you can move the axes by arrow keys</div>
<div class="t" style="left:103.5px;top:1430.2px;font-size:14px;line-height:14px;color:#e8e8e8;font-weight:normal;font-family:'Liberation Sans', sans-serif;">19:08:05</div>
<div class="t" style="left:183.5px;top:1430.2px;font-size:14px;line-height:14px;color:#e8e8e8;font-weight:normal;font-family:'Liberation Sans', sans-serif;">Info</div>
<div class="t" style="left:263.4px;top:1430.2px;font-size:14px;line-height:14px;color:#e8e8e8;font-weight:normal;font-family:'Liberation Sans', sans-serif;letter-spacing:-0.55px">OFFSET AND PLANE SAVED TO INI FILE</div>
<div class="b" style="left:2194px;top:1315px;width:24px;height:133px;background:#3a3a3a;border:1px solid #444"></div>
<svg class="b" style="left:2194px;top:1315px" width="24" height="22"><path d="M5 15L12 8L19 15" stroke="#9a90a0" stroke-width="2.6" fill="none"/></svg>
<div class="b" style="left:2195px;top:1337px;width:22px;height:28px;background-image:repeating-conic-gradient(#b8b8b8 0% 25%, #6a6a6a 0% 50%);background-size:2px 2px"></div>
<svg class="b" style="left:2194px;top:1425px" width="24" height="23"><path d="M5 8L12 15L19 8" stroke="#9a90a0" stroke-width="2.6" fill="none"/></svg>
<div class="btn" style="left:8px;top:1461px"><div class="in" style="background:#2349a6"><svg width="48" height="48" viewBox="0 0 48 48"><rect x="2.2" y="13" width="43.8" height="3.1" fill="#fff"/><rect x="2.2" y="31" width="43.8" height="3.4" fill="#fff"/>
<text x="3.6" y="29.4" font-family="Liberation Sans" font-size="14" fill="#fff" textLength="39.7" lengthAdjust="spacingAndGlyphs">RESET</text></svg></div></div>
<div class="t" style="left:-14.0px;top:1522.7px;font-size:12px;line-height:12px;color:#e8e8e8;font-weight:normal;font-family:'Liberation Sans', sans-serif;width:100px;text-align:center">F1</div>
<div class="btn" style="left:72px;top:1461px"><div class="in" style="background:#2349a6"><svg width="48" height="48" viewBox="0 0 48 48"><circle cx="24.1" cy="24" r="16.7" fill="#fff"/>
<path d="M24.1 24H40.8A16.7 16.7 0 0 0 24.1 7.3Z" fill="#2349a6"/><path d="M24.1 24H7.4A16.7 16.7 0 0 0 24.1 40.7Z" fill="#2349a6"/>
<circle cx="24.1" cy="24" r="16.7" fill="none" stroke="#fff" stroke-width="1.5"/>
<path d="M24.1 2.2v43.6M2 24h44" stroke="#fff" stroke-width="1.6"/></svg></div></div>
<div class="t" style="left:50.0px;top:1522.7px;font-size:12px;line-height:12px;color:#e8e8e8;font-weight:normal;font-family:'Liberation Sans', sans-serif;width:100px;text-align:center">F2</div>
<div class="btn" style="left:136px;top:1461px"><div class="in" style="background:#2349a6"><svg width="48" height="48" viewBox="0 0 48 48"><circle cx="24.1" cy="24" r="16.7" fill="none" stroke="#fff" stroke-width="1.5"/>
<path d="M24.1 2.2v43.6M2 24h44" stroke="#fff" stroke-width="1.6"/></svg></div></div>
<div class="t" style="left:114.0px;top:1522.7px;font-size:12px;line-height:12px;color:#e8e8e8;font-weight:normal;font-family:'Liberation Sans', sans-serif;width:100px;text-align:center">F3</div>
<div class="btn" style="left:200px;top:1461px"><div class="in" style="background:#2349a6"><svg width="48" height="48" viewBox="0 0 48 48"><path d="M9.2 5.5H32L40.7 17.6L32 29.8H9.2V27.1H30V8.1H9.2Z" fill="#fff"/><path d="M9.4 17.7h11.8M17.6 14l3.8 3.7-3.8 3.7" stroke="#fff" stroke-width="1.3" fill="none"/>
<text x="9.4" y="44.6" font-family="Liberation Sans" font-size="11" font-weight="bold" fill="#fff" textLength="30.8" lengthAdjust="spacingAndGlyphs">AUTO</text></svg></div></div>
<div class="t" style="left:178.0px;top:1522.7px;font-size:12px;line-height:12px;color:#e8e8e8;font-weight:normal;font-family:'Liberation Sans', sans-serif;width:100px;text-align:center">F4</div>
<div class="btn" style="left:276px;top:1461px"><div class="in" style="background:#2349a6"><svg width="48" height="48" viewBox="0 0 48 48"><rect x="6" y="30.5" width="35.5" height="12" rx="1" fill="none" stroke="#dde4f8" stroke-width="1.2"/>
<g fill="#dde4f8"><rect x="8.5" y="33" width="31" height="1.6"/><rect x="8.5" y="36" width="31" height="1.6"/><rect x="8.5" y="39" width="31" height="1.6"/></g>
<g fill="#2349a6"><rect x="11" y="32" width="0.8" height="9"/><rect x="14" y="32" width="0.8" height="6"/><rect x="17" y="32" width="0.8" height="6"/><rect x="20" y="32" width="0.8" height="6"/><rect x="23" y="32" width="0.8" height="6"/><rect x="26" y="32" width="0.8" height="6"/><rect x="29" y="32" width="0.8" height="9"/><rect x="32" y="32" width="0.8" height="9"/><rect x="35" y="32" width="0.8" height="9"/><rect x="12.5" y="38.8" width="1.2" height="2"/></g></svg></div></div>
<div class="t" style="left:254.0px;top:1522.7px;font-size:12px;line-height:12px;color:#e8e8e8;font-weight:normal;font-family:'Liberation Sans', sans-serif;width:100px;text-align:center">F5</div>
<div class="btn" style="left:340px;top:1461px"><div class="in" style="background:#2349a6"><svg width="48" height="48" viewBox="0 0 48 48"><path d="M9.2 5.5H32L40.7 17.6L32 29.8H9.2V27.1H30V8.1H9.2Z" fill="#fff"/><path d="M14.6 25.6c-.6-2-1.8-3.5-3-5-.6-.8.1-1.8 1-1.2l1.6 1.5V13c0-1.4 2-1.4 2 0v-2.2c0-1.4 2-1.4 2 0V10c0-1.4 2-1.4 2 0v1.2c0-1.4 2-1.4 2 0v3c0-1.3 2-1.3 2 0v6c0 2-1 3.5-1.6 5.4" fill="none" stroke="#e8eeff" stroke-width="0.9"/>
<path d="M16.6 12.6v6M18.6 10.6v7M20.6 11v7M22.6 14v6" stroke="#e8eeff" stroke-width="0.7"/>
<text x="12.8" y="44.6" font-family="Liberation Sans" font-size="12" font-weight="bold" fill="#fff" textLength="21.6" lengthAdjust="spacingAndGlyphs">MDI</text></svg></div></div>
<div class="t" style="left:318.0px;top:1522.7px;font-size:12px;line-height:12px;color:#e8e8e8;font-weight:normal;font-family:'Liberation Sans', sans-serif;width:100px;text-align:center">F6</div>
<div class="btn" style="left:404px;top:1461px"><div class="in" style="background:#2349a6"><svg width="48" height="48" viewBox="0 0 48 48"><path d="M10.7 10.1V5.2H37V10.1M10.7 26.1V31.8H37V26.1" stroke="#fff" stroke-width="2.4" fill="none"/>
<text x="12.9" y="28.1" font-family="Liberation Sans" font-size="26.4" font-weight="bold" fill="#fff" textLength="21.7" lengthAdjust="spacingAndGlyphs">M</text>
<text x="0.5" y="44.6" font-family="Liberation Sans" font-size="11.7" font-weight="bold" fill="#fff" textLength="46.7" lengthAdjust="spacingAndGlyphs">MACHINE</text></svg></div></div>
<div class="t" style="left:382.0px;top:1522.7px;font-size:12px;line-height:12px;color:#e8e8e8;font-weight:normal;font-family:'Liberation Sans', sans-serif;width:100px;text-align:center">F7</div>
<div class="btn" style="left:468px;top:1461px"><div class="in" style="background:#2349a6"><svg width="48" height="48" viewBox="0 0 48 48"><g fill="none" stroke="#fff" stroke-width="1.2"><rect x="3.5" y="4" width="15.8" height="20.5"/><circle cx="17.2" cy="31.4" r="10.2"/><rect x="22.5" y="20.3" width="23.7" height="18.4"/></g></svg></div></div>
<div class="t" style="left:446.0px;top:1522.7px;font-size:12px;line-height:12px;color:#e8e8e8;font-weight:normal;font-family:'Liberation Sans', sans-serif;width:100px;text-align:center">F8</div>
<div class="btn" style="left:544px;top:1461px"><div class="in" style="background:#2349a6"><svg width="48" height="48" viewBox="0 0 48 48"><path d="M23.8 0.2L29.8 10.6H17.9Z M23.8 48L29.8 37.3H17.9Z M0 24.2L10.4 18.3V30Z M47.8 24.2L37.3 18.3V30Z" fill="#fff"/><text x="13" y="28.3" font-family="Liberation Sans" font-size="11.5" font-weight="bold" fill="#eef2ff" textLength="21.7" lengthAdjust="spacingAndGlyphs">JOG</text></svg></div></div>
<div class="t" style="left:522.0px;top:1522.7px;font-size:12px;line-height:12px;color:#e8e8e8;font-weight:normal;font-family:'Liberation Sans', sans-serif;width:100px;text-align:center">F9</div>
<div class="btn" style="left:608px;top:1461px"><div class="in" style="background:#2349a6"><svg width="48" height="48" viewBox="0 0 48 48"><path d="M23.8 0.2L29.8 10.6H17.9Z M23.8 48L29.8 37.3H17.9Z M0 24.2L10.4 18.3V30Z M47.8 24.2L37.3 18.3V30Z" fill="#fff"/><text x="13" y="23.2" font-family="Liberation Sans" font-size="11.5" font-weight="bold" fill="#eef2ff" textLength="21.4" lengthAdjust="spacingAndGlyphs">JOG</text><text x="13.2" y="33.4" font-family="Liberation Sans" font-size="11" font-weight="bold" fill="#eef2ff" textLength="21.6" lengthAdjust="spacingAndGlyphs">PAD</text></svg></div></div>
<div class="t" style="left:586.0px;top:1522.7px;font-size:12px;line-height:12px;color:#e8e8e8;font-weight:normal;font-family:'Liberation Sans', sans-serif;width:100px;text-align:center">F10</div>
<div class="btn" style="left:672px;top:1461px"><div class="in" style="background:#2349a6"><svg width="48" height="48" viewBox="0 0 48 48"><circle cx="24.2" cy="16.6" r="6" fill="#fff"/><path d="M11 35c0-5.5 3.2-9.5 8-11l5.2 6.8L29.4 24c4.8 1.5 7.4 5.5 7.4 11 0 1.3-.9 2.2-2.2 2.2H13.2c-1.3 0-2.2-.9-2.2-2.2z" fill="#fff"/></svg></div></div>
<div class="t" style="left:650.0px;top:1522.7px;font-size:12px;line-height:12px;color:#e8e8e8;font-weight:normal;font-family:'Liberation Sans', sans-serif;width:100px;text-align:center">F11</div>
<div class="btn" style="left:736px;top:1461px"><div class="in" style="background:#2349a6"><svg width="48" height="48" viewBox="0 0 48 48"><circle cx="24.2" cy="16.6" r="6" fill="#fff"/><path d="M11 35c0-5.5 3.2-9.5 8-11l5.2 6.8L29.4 24c4.8 1.5 7.4 5.5 7.4 11 0 1.3-.9 2.2-2.2 2.2H13.2c-1.3 0-2.2-.9-2.2-2.2z" fill="#fff"/></svg></div></div>
<div class="t" style="left:714.0px;top:1522.7px;font-size:12px;line-height:12px;color:#e8e8e8;font-weight:normal;font-family:'Liberation Sans', sans-serif;width:100px;text-align:center">F12</div>
<div class="b" style="left:2226px;top:465px;width:331px;height:910px;border:1px solid #454443;background:#2f2e2d"></div>
<div class="b" style="left:2227px;top:466px;width:51px;height:22px;background:#333232;border-bottom:1px solid #4a4948;border-right:1px solid #4a4948"></div>
<div class="b" style="left:2279px;top:466px;width:251px;height:22px;background:#1f1e1e"></div>
<div class="t" style="left:2232.3px;top:470.2px;font-size:13.5px;line-height:13.5px;color:#e8e8e8;font-weight:normal;font-family:'Liberation Sans', sans-serif;">1</div>
<div class="t" style="left:2281.9px;top:470.9px;font-size:11.5px;line-height:11.5px;color:#e0e0e0;font-weight:normal;font-family:'Liberation Sans', sans-serif;">;***************************************************</div>
<div class="t" style="left:2515.5px;top:471.5px;font-size:11.5px;line-height:11.5px;color:#e0e0e0;font-weight:normal;font-family:'Liberation Sans', sans-serif;letter-spacing:-1.4px">...</div>
<div class="b" style="left:2227px;top:488px;width:51px;height:22px;background:#333232;border-bottom:1px solid #4a4948;border-right:1px solid #4a4948"></div>
<div class="b" style="left:2279px;top:488px;width:251px;height:22px;background:#3a3a3a"></div>
<div class="t" style="left:2232.3px;top:492.2px;font-size:13.5px;line-height:13.5px;color:#e8e8e8;font-weight:normal;font-family:'Liberation Sans', sans-serif;">2</div>
<div class="t" style="left:2281.9px;top:492.7px;font-size:11.8px;line-height:11.8px;color:#ececec;font-weight:normal;font-family:'Liberation Sans', sans-serif;">;SOROTEC GmbH</div>
<div class="b" style="left:2227px;top:510px;width:51px;height:22px;background:#333232;border-bottom:1px solid #4a4948;border-right:1px solid #4a4948"></div>
<div class="b" style="left:2279px;top:510px;width:251px;height:22px;background:#1f1e1e"></div>
<div class="t" style="left:2232.3px;top:514.2px;font-size:13.5px;line-height:13.5px;color:#e8e8e8;font-weight:normal;font-family:'Liberation Sans', sans-serif;">3</div>
<div class="t" style="left:2281.9px;top:514.7px;font-size:11.8px;line-height:11.8px;color:#ececec;font-weight:normal;font-family:'Liberation Sans', sans-serif;">;Withig 12</div>
<div class="b" style="left:2227px;top:532px;width:51px;height:22px;background:#333232;border-bottom:1px solid #4a4948;border-right:1px solid #4a4948"></div>
<div class="b" style="left:2279px;top:532px;width:251px;height:22px;background:#3a3a3a"></div>
<div class="t" style="left:2232.3px;top:536.2px;font-size:13.5px;line-height:13.5px;color:#e8e8e8;font-weight:normal;font-family:'Liberation Sans', sans-serif;">4</div>
<div class="t" style="left:2281.9px;top:536.7px;font-size:11.8px;line-height:11.8px;color:#ececec;font-weight:normal;font-family:'Liberation Sans', sans-serif;">;77836 Rheinm<span class="q"><b>?</b></span>nster</div>
<div class="b" style="left:2227px;top:554px;width:51px;height:22px;background:#333232;border-bottom:1px solid #4a4948;border-right:1px solid #4a4948"></div>
<div class="b" style="left:2279px;top:554px;width:251px;height:22px;background:#1f1e1e"></div>
<div class="t" style="left:2232.3px;top:558.2px;font-size:13.5px;line-height:13.5px;color:#e8e8e8;font-weight:normal;font-family:'Liberation Sans', sans-serif;">5</div>
<div class="t" style="left:2281.9px;top:558.7px;font-size:11.8px;line-height:11.8px;color:#ececec;font-weight:normal;font-family:'Liberation Sans', sans-serif;">;Germany</div>
<div class="b" style="left:2227px;top:576px;width:51px;height:22px;background:#333232;border-bottom:1px solid #4a4948;border-right:1px solid #4a4948"></div>
<div class="b" style="left:2279px;top:576px;width:251px;height:22px;background:#3a3a3a"></div>
<div class="t" style="left:2232.3px;top:580.2px;font-size:13.5px;line-height:13.5px;color:#e8e8e8;font-weight:normal;font-family:'Liberation Sans', sans-serif;">6</div>
<div class="t" style="left:2281.9px;top:580.9px;font-size:11.5px;line-height:11.5px;color:#e0e0e0;font-weight:normal;font-family:'Liberation Sans', sans-serif;">;***************************************************</div>
<div class="t" style="left:2515.5px;top:581.5px;font-size:11.5px;line-height:11.5px;color:#e0e0e0;font-weight:normal;font-family:'Liberation Sans', sans-serif;letter-spacing:-1.4px">...</div>
<div class="b" style="left:2227px;top:598px;width:51px;height:22px;background:#333232;border-bottom:1px solid #4a4948;border-right:1px solid #4a4948"></div>
<div class="b" style="left:2279px;top:598px;width:251px;height:22px;background:#1f1e1e"></div>
<div class="t" style="left:2232.3px;top:602.2px;font-size:13.5px;line-height:13.5px;color:#e8e8e8;font-weight:normal;font-family:'Liberation Sans', sans-serif;">7</div>
<div class="t" style="left:2281.9px;top:602.7px;font-size:11.8px;line-height:11.8px;color:#ececec;font-weight:normal;font-family:'Liberation Sans', sans-serif;">;WZW  V32.9e  Auto Werkzeugwechsler</div>
<div class="b" style="left:2227px;top:620px;width:51px;height:22px;background:#333232;border-bottom:1px solid #4a4948;border-right:1px solid #4a4948"></div>
<div class="b" style="left:2279px;top:620px;width:251px;height:22px;background:#3a3a3a"></div>
<div class="t" style="left:2232.3px;top:624.2px;font-size:13.5px;line-height:13.5px;color:#e8e8e8;font-weight:normal;font-family:'Liberation Sans', sans-serif;">8</div>
<div class="t" style="left:2281.9px;top:624.7px;font-size:11.8px;line-height:11.8px;color:#ececec;font-weight:normal;font-family:'Liberation Sans', sans-serif;">;CPU: V5A/V5B/V760</div>
<div class="b" style="left:2227px;top:642px;width:51px;height:22px;background:#333232;border-bottom:1px solid #4a4948;border-right:1px solid #4a4948"></div>
<div class="b" style="left:2279px;top:642px;width:251px;height:22px;background:#1f1e1e"></div>
<div class="t" style="left:2232.3px;top:646.2px;font-size:13.5px;line-height:13.5px;color:#e8e8e8;font-weight:normal;font-family:'Liberation Sans', sans-serif;">9</div>
<div class="t" style="left:2281.9px;top:646.7px;font-size:11.8px;line-height:11.8px;color:#ececec;font-weight:normal;font-family:'Liberation Sans', sans-serif;">;Kunde:  Standard</div>
<div class="b" style="left:2227px;top:664px;width:51px;height:22px;background:#333232;border-bottom:1px solid #4a4948;border-right:1px solid #4a4948"></div>
<div class="b" style="left:2279px;top:664px;width:251px;height:22px;background:#3a3a3a"></div>
<div class="t" style="left:2232.3px;top:668.2px;font-size:13.5px;line-height:13.5px;color:#e8e8e8;font-weight:normal;font-family:'Liberation Sans', sans-serif;">10</div>
<div class="t" style="left:2281.9px;top:668.9px;font-size:11.5px;line-height:11.5px;color:#e0e0e0;font-weight:normal;font-family:'Liberation Sans', sans-serif;">;***************************************************</div>
<div class="t" style="left:2515.5px;top:669.5px;font-size:11.5px;line-height:11.5px;color:#e0e0e0;font-weight:normal;font-family:'Liberation Sans', sans-serif;letter-spacing:-1.4px">...</div>
<div class="b" style="left:2227px;top:686px;width:51px;height:22px;background:#333232;border-bottom:1px solid #4a4948;border-right:1px solid #4a4948"></div>
<div class="b" style="left:2279px;top:686px;width:251px;height:22px;background:#1f1e1e"></div>
<div class="t" style="left:2232.3px;top:690.2px;font-size:13.5px;line-height:13.5px;color:#e8e8e8;font-weight:normal;font-family:'Liberation Sans', sans-serif;">11</div>
<div class="b" style="left:2227px;top:708px;width:51px;height:22px;background:#333232;border-bottom:1px solid #4a4948;border-right:1px solid #4a4948"></div>
<div class="b" style="left:2279px;top:708px;width:251px;height:22px;background:#3a3a3a"></div>
<div class="t" style="left:2232.3px;top:712.2px;font-size:13.5px;line-height:13.5px;color:#e8e8e8;font-weight:normal;font-family:'Liberation Sans', sans-serif;">12</div>
<div class="b" style="left:2227px;top:730px;width:51px;height:22px;background:#333232;border-bottom:1px solid #4a4948;border-right:1px solid #4a4948"></div>
<div class="b" style="left:2279px;top:730px;width:251px;height:22px;background:#1f1e1e"></div>
<div class="t" style="left:2232.3px;top:734.2px;font-size:13.5px;line-height:13.5px;color:#e8e8e8;font-weight:normal;font-family:'Liberation Sans', sans-serif;">13</div>
<div class="t" style="left:2281.9px;top:734.9px;font-size:11.5px;line-height:11.5px;color:#e0e0e0;font-weight:normal;font-family:'Liberation Sans', sans-serif;">;***************************************************</div>
<div class="t" style="left:2515.5px;top:735.5px;font-size:11.5px;line-height:11.5px;color:#e0e0e0;font-weight:normal;font-family:'Liberation Sans', sans-serif;letter-spacing:-1.4px">...</div>
<div class="b" style="left:2227px;top:752px;width:51px;height:22px;background:#333232;border-bottom:1px solid #4a4948;border-right:1px solid #4a4948"></div>
<div class="b" style="left:2279px;top:752px;width:251px;height:22px;background:#3a3a3a"></div>
<div class="t" style="left:2232.3px;top:756.2px;font-size:13.5px;line-height:13.5px;color:#e8e8e8;font-weight:normal;font-family:'Liberation Sans', sans-serif;">14</div>
<div class="t" style="left:2281.9px;top:756.7px;font-size:11.8px;line-height:11.8px;color:#ececec;font-weight:normal;font-family:'Liberation Sans', sans-serif;">;DOKU</div>
<div class="b" style="left:2227px;top:774px;width:51px;height:22px;background:#333232;border-bottom:1px solid #4a4948;border-right:1px solid #4a4948"></div>
<div class="b" style="left:2279px;top:774px;width:251px;height:22px;background:#1f1e1e"></div>
<div class="t" style="left:2232.3px;top:778.2px;font-size:13.5px;line-height:13.5px;color:#e8e8e8;font-weight:normal;font-family:'Liberation Sans', sans-serif;">15</div>
<div class="t" style="left:2281.9px;top:778.9px;font-size:11.5px;line-height:11.5px;color:#e0e0e0;font-weight:normal;font-family:'Liberation Sans', sans-serif;">;***************************************************</div>
<div class="t" style="left:2515.5px;top:779.5px;font-size:11.5px;line-height:11.5px;color:#e0e0e0;font-weight:normal;font-family:'Liberation Sans', sans-serif;letter-spacing:-1.4px">...</div>
<div class="b" style="left:2227px;top:796px;width:51px;height:22px;background:#333232;border-bottom:1px solid #4a4948;border-right:1px solid #4a4948"></div>
<div class="b" style="left:2279px;top:796px;width:251px;height:22px;background:#3a3a3a"></div>
<div class="t" style="left:2232.3px;top:800.2px;font-size:13.5px;line-height:13.5px;color:#e8e8e8;font-weight:normal;font-family:'Liberation Sans', sans-serif;">16</div>
<div class="t" style="left:2281.9px;top:800.7px;font-size:11.8px;line-height:11.8px;color:#ececec;font-weight:normal;font-family:'Liberation Sans', sans-serif;">;Versionshistorie</div>
<div class="b" style="left:2227px;top:818px;width:51px;height:22px;background:#333232;border-bottom:1px solid #4a4948;border-right:1px solid #4a4948"></div>
<div class="b" style="left:2279px;top:818px;width:251px;height:22px;background:#1f1e1e"></div>
<div class="t" style="left:2232.3px;top:822.2px;font-size:13.5px;line-height:13.5px;color:#e8e8e8;font-weight:normal;font-family:'Liberation Sans', sans-serif;">17</div>
<div class="t" style="left:2281.9px;top:822.7px;font-size:11.8px;line-height:11.8px;color:#ececec;font-weight:normal;font-family:'Liberation Sans', sans-serif;">;————</div>
<div class="b" style="left:2227px;top:840px;width:51px;height:22px;background:#333232;border-bottom:1px solid #4a4948;border-right:1px solid #4a4948"></div>
<div class="b" style="left:2279px;top:840px;width:251px;height:22px;background:#3a3a3a"></div>
<div class="t" style="left:2232.3px;top:844.2px;font-size:13.5px;line-height:13.5px;color:#e8e8e8;font-weight:normal;font-family:'Liberation Sans', sans-serif;">18</div>
<div class="t" style="left:2281.9px;top:844.7px;font-size:11.8px;line-height:11.8px;color:#ececec;font-weight:normal;font-family:'Liberation Sans', sans-serif;">;V32.9e    : WZ-L<span class="q"><b>?</b></span>ngenmessung - Nur posit…</div>
<div class="b" style="left:2227px;top:862px;width:51px;height:22px;background:#333232;border-bottom:1px solid #4a4948;border-right:1px solid #4a4948"></div>
<div class="b" style="left:2279px;top:862px;width:251px;height:22px;background:#1f1e1e"></div>
<div class="t" style="left:2232.3px;top:866.2px;font-size:13.5px;line-height:13.5px;color:#e8e8e8;font-weight:normal;font-family:'Liberation Sans', sans-serif;">19</div>
<div class="t" style="left:2281.9px;top:866.7px;font-size:11.8px;line-height:11.8px;color:#ececec;font-weight:normal;font-family:'Liberation Sans', sans-serif;">;V32.9d    : 3D-finder V4.0</div>
<div class="b" style="left:2227px;top:884px;width:51px;height:22px;background:#333232;border-bottom:1px solid #4a4948;border-right:1px solid #4a4948"></div>
<div class="b" style="left:2279px;top:884px;width:251px;height:22px;background:#3a3a3a"></div>
<div class="t" style="left:2232.3px;top:888.2px;font-size:13.5px;line-height:13.5px;color:#e8e8e8;font-weight:normal;font-family:'Liberation Sans', sans-serif;">20</div>
<div class="t" style="left:2281.9px;top:888.7px;font-size:11.8px;line-height:11.8px;color:#ececec;font-weight:normal;font-family:'Liberation Sans', sans-serif;">;       : Ersetzt G92 mit G10 L20 Pn zum Null…</div>
<div class="b" style="left:2227px;top:906px;width:51px;height:22px;background:#333232;border-bottom:1px solid #4a4948;border-right:1px solid #4a4948"></div>
<div class="b" style="left:2279px;top:906px;width:251px;height:22px;background:#1f1e1e"></div>
<div class="t" style="left:2232.3px;top:910.2px;font-size:13.5px;line-height:13.5px;color:#e8e8e8;font-weight:normal;font-family:'Liberation Sans', sans-serif;">21</div>
<div class="t" style="left:2281.9px;top:910.7px;font-size:11.8px;line-height:11.8px;color:#ececec;font-weight:normal;font-family:'Liberation Sans', sans-serif;">;       : aktiven Koordinatensystem</div>
<div class="b" style="left:2227px;top:928px;width:51px;height:22px;background:#333232;border-bottom:1px solid #4a4948;border-right:1px solid #4a4948"></div>
<div class="b" style="left:2279px;top:928px;width:251px;height:22px;background:#3a3a3a"></div>
<div class="t" style="left:2232.3px;top:932.2px;font-size:13.5px;line-height:13.5px;color:#e8e8e8;font-weight:normal;font-family:'Liberation Sans', sans-serif;">22</div>
<div class="t" style="left:2281.9px;top:932.7px;font-size:11.8px;line-height:11.8px;color:#ececec;font-weight:normal;font-family:'Liberation Sans', sans-serif;">;V32.9c    : Sicherheitsoffset neues Dialogfe…</div>
<div class="b" style="left:2227px;top:950px;width:51px;height:22px;background:#333232;border-bottom:1px solid #4a4948;border-right:1px solid #4a4948"></div>
<div class="b" style="left:2279px;top:950px;width:251px;height:22px;background:#1f1e1e"></div>
<div class="t" style="left:2232.3px;top:954.2px;font-size:13.5px;line-height:13.5px;color:#e8e8e8;font-weight:normal;font-family:'Liberation Sans', sans-serif;">23</div>
<div class="t" style="left:2281.9px;top:954.7px;font-size:11.8px;line-height:11.8px;color:#ececec;font-weight:normal;font-family:'Liberation Sans', sans-serif;">;V32.9b    : Sicherheitsoffset anfahren nach …</div>
<div class="b" style="left:2227px;top:972px;width:51px;height:22px;background:#333232;border-bottom:1px solid #4a4948;border-right:1px solid #4a4948"></div>
<div class="b" style="left:2279px;top:972px;width:251px;height:22px;background:#3a3a3a"></div>
<div class="t" style="left:2232.3px;top:976.2px;font-size:13.5px;line-height:13.5px;color:#e8e8e8;font-weight:normal;font-family:'Liberation Sans', sans-serif;">24</div>
<div class="t" style="left:2281.9px;top:976.7px;font-size:11.8px;line-height:11.8px;color:#ececec;font-weight:normal;font-family:'Liberation Sans', sans-serif;">;V32.9a    : Bruchkontrolle Sensorzustand p…</div>
<div class="b" style="left:2227px;top:994px;width:51px;height:22px;background:#333232;border-bottom:1px solid #4a4948;border-right:1px solid #4a4948"></div>
<div class="b" style="left:2279px;top:994px;width:251px;height:22px;background:#1f1e1e"></div>
<div class="t" style="left:2232.3px;top:998.2px;font-size:13.5px;line-height:13.5px;color:#e8e8e8;font-weight:normal;font-family:'Liberation Sans', sans-serif;">25</div>
<div class="t" style="left:2281.9px;top:998.7px;font-size:11.8px;line-height:11.8px;color:#ececec;font-weight:normal;font-family:'Liberation Sans', sans-serif;">;V32.9    : Kegelcheck Sensorzustand pr<span class="q"><b>?</b></span>fe…</div>
<div class="b" style="left:2227px;top:1016px;width:51px;height:22px;background:#333232;border-bottom:1px solid #4a4948;border-right:1px solid #4a4948"></div>
<div class="b" style="left:2279px;top:1016px;width:251px;height:22px;background:#3a3a3a"></div>
<div class="t" style="left:2232.3px;top:1020.2px;font-size:13.5px;line-height:13.5px;color:#e8e8e8;font-weight:normal;font-family:'Liberation Sans', sans-serif;">26</div>
<div class="t" style="left:2281.9px;top:1020.7px;font-size:11.8px;line-height:11.8px;color:#ececec;font-weight:normal;font-family:'Liberation Sans', sans-serif;">;    : 3D-finder V3.9</div>
<div class="b" style="left:2227px;top:1038px;width:51px;height:22px;background:#333232;border-bottom:1px solid #4a4948;border-right:1px solid #4a4948"></div>
<div class="b" style="left:2279px;top:1038px;width:251px;height:22px;background:#1f1e1e"></div>
<div class="t" style="left:2232.3px;top:1042.2px;font-size:13.5px;line-height:13.5px;color:#e8e8e8;font-weight:normal;font-family:'Liberation Sans', sans-serif;">27</div>
<div class="t" style="left:2281.9px;top:1042.7px;font-size:11.8px;line-height:11.8px;color:#ececec;font-weight:normal;font-family:'Liberation Sans', sans-serif;">;       : Bug-Fix Spindel-Versatz</div>
<div class="b" style="left:2227px;top:1060px;width:51px;height:22px;background:#333232;border-bottom:1px solid #4a4948;border-right:1px solid #4a4948"></div>
<div class="b" style="left:2279px;top:1060px;width:251px;height:22px;background:#3a3a3a"></div>
<div class="t" style="left:2232.3px;top:1064.2px;font-size:13.5px;line-height:13.5px;color:#e8e8e8;font-weight:normal;font-family:'Liberation Sans', sans-serif;">28</div>
<div class="t" style="left:2281.9px;top:1064.7px;font-size:11.8px;line-height:11.8px;color:#ececec;font-weight:normal;font-family:'Liberation Sans', sans-serif;">;V32.8b : 3D-finder V3.8 (VF)</div>
<div class="b" style="left:2227px;top:1082px;width:51px;height:22px;background:#333232;border-bottom:1px solid #4a4948;border-right:1px solid #4a4948"></div>
<div class="b" style="left:2279px;top:1082px;width:251px;height:22px;background:#1f1e1e"></div>
<div class="t" style="left:2232.3px;top:1086.2px;font-size:13.5px;line-height:13.5px;color:#e8e8e8;font-weight:normal;font-family:'Liberation Sans', sans-serif;">29</div>
<div class="t" style="left:2281.9px;top:1086.7px;font-size:11.8px;line-height:11.8px;color:#ececec;font-weight:normal;font-family:'Liberation Sans', sans-serif;">;       : Ber<span class="q"><b>?</b></span>cksichtigung von Werkst<span class="q"><b>?</b></span>cken …</div>
<div class="b" style="left:2227px;top:1104px;width:51px;height:22px;background:#333232;border-bottom:1px solid #4a4948;border-right:1px solid #4a4948"></div>
<div class="b" style="left:2279px;top:1104px;width:251px;height:22px;background:#3a3a3a"></div>
<div class="t" style="left:2232.3px;top:1108.2px;font-size:13.5px;line-height:13.5px;color:#e8e8e8;font-weight:normal;font-family:'Liberation Sans', sans-serif;">30</div>
<div class="t" style="left:2281.9px;top:1108.7px;font-size:11.8px;line-height:11.8px;color:#ececec;font-weight:normal;font-family:'Liberation Sans', sans-serif;">;       : Positionieren auf Werkst<span class="q"><b>?</b></span>ck-Nullpun…</div>
<div class="b" style="left:2227px;top:1126px;width:51px;height:22px;background:#333232;border-bottom:1px solid #4a4948;border-right:1px solid #4a4948"></div>
<div class="b" style="left:2279px;top:1126px;width:251px;height:22px;background:#1f1e1e"></div>
<div class="t" style="left:2232.3px;top:1130.2px;font-size:13.5px;line-height:13.5px;color:#e8e8e8;font-weight:normal;font-family:'Liberation Sans', sans-serif;">31</div>
<div class="t" style="left:2281.9px;top:1130.7px;font-size:11.8px;line-height:11.8px;color:#ececec;font-weight:normal;font-family:'Liberation Sans', sans-serif;">;V32.8a : Ausw<span class="q"><b>?</b></span>hlbar ob Autowerkezuge a…</div>
<div class="b" style="left:2227px;top:1148px;width:51px;height:22px;background:#333232;border-bottom:1px solid #4a4948;border-right:1px solid #4a4948"></div>
<div class="b" style="left:2279px;top:1148px;width:251px;height:22px;background:#3a3a3a"></div>
<div class="t" style="left:2232.3px;top:1152.2px;font-size:13.5px;line-height:13.5px;color:#e8e8e8;font-weight:normal;font-family:'Liberation Sans', sans-serif;">32</div>
<div class="t" style="left:2281.9px;top:1152.7px;font-size:11.8px;line-height:11.8px;color:#ececec;font-weight:normal;font-family:'Liberation Sans', sans-serif;">;V32.7e : In gosub &#x27;zero_set_rotation&#x27; falls ei…</div>
<div class="b" style="left:2227px;top:1170px;width:51px;height:22px;background:#333232;border-bottom:1px solid #4a4948;border-right:1px solid #4a4948"></div>
<div class="b" style="left:2279px;top:1170px;width:251px;height:22px;background:#1f1e1e"></div>
<div class="t" style="left:2232.3px;top:1174.2px;font-size:13.5px;line-height:13.5px;color:#e8e8e8;font-weight:normal;font-family:'Liberation Sans', sans-serif;">33</div>
<div class="t" style="left:2281.9px;top:1174.7px;font-size:11.8px;line-height:11.8px;color:#ececec;font-weight:normal;font-family:'Liberation Sans', sans-serif;">;     und somit auch die Spindel was den Me…</div>
<div class="b" style="left:2227px;top:1192px;width:51px;height:22px;background:#333232;border-bottom:1px solid #4a4948;border-right:1px solid #4a4948"></div>
<div class="b" style="left:2279px;top:1192px;width:251px;height:22px;background:#3a3a3a"></div>
<div class="t" style="left:2232.3px;top:1196.2px;font-size:13.5px;line-height:13.5px;color:#e8e8e8;font-weight:normal;font-family:'Liberation Sans', sans-serif;">34</div>
<div class="t" style="left:2281.9px;top:1196.7px;font-size:11.8px;line-height:11.8px;color:#ececec;font-weight:normal;font-family:'Liberation Sans', sans-serif;">;       : Letzte Zeile ge<span class="q"><b>?</b></span>ndert - hier darf kein …</div>
<div class="b" style="left:2227px;top:1214px;width:51px;height:22px;background:#333232;border-bottom:1px solid #4a4948;border-right:1px solid #4a4948"></div>
<div class="b" style="left:2279px;top:1214px;width:251px;height:22px;background:#1f1e1e"></div>
<div class="t" style="left:2232.3px;top:1218.2px;font-size:13.5px;line-height:13.5px;color:#e8e8e8;font-weight:normal;font-family:'Liberation Sans', sans-serif;">35</div>
<div class="t" style="left:2281.9px;top:1218.7px;font-size:11.8px;line-height:11.8px;color:#ececec;font-weight:normal;font-family:'Liberation Sans', sans-serif;">;V32.7d : 3D-finder V3.7 (VF)</div>
<div class="b" style="left:2227px;top:1236px;width:51px;height:22px;background:#333232;border-bottom:1px solid #4a4948;border-right:1px solid #4a4948"></div>
<div class="b" style="left:2279px;top:1236px;width:251px;height:22px;background:#3a3a3a"></div>
<div class="t" style="left:2232.3px;top:1240.2px;font-size:13.5px;line-height:13.5px;color:#e8e8e8;font-weight:normal;font-family:'Liberation Sans', sans-serif;">36</div>
<div class="t" style="left:2281.9px;top:1240.7px;font-size:11.8px;line-height:11.8px;color:#ececec;font-weight:normal;font-family:'Liberation Sans', sans-serif;">;       : Taster an Fix-Position (Spindel-Versat…</div>
<div class="b" style="left:2227px;top:1258px;width:51px;height:22px;background:#333232;border-bottom:1px solid #4a4948;border-right:1px solid #4a4948"></div>
<div class="b" style="left:2279px;top:1258px;width:251px;height:22px;background:#1f1e1e"></div>
<div class="t" style="left:2232.3px;top:1262.2px;font-size:13.5px;line-height:13.5px;color:#e8e8e8;font-weight:normal;font-family:'Liberation Sans', sans-serif;">37</div>
<div class="t" style="left:2281.9px;top:1262.7px;font-size:11.8px;line-height:11.8px;color:#ececec;font-weight:normal;font-family:'Liberation Sans', sans-serif;">;       : Sensor-Check Optimierung</div>
<div class="b" style="left:2227px;top:1280px;width:51px;height:22px;background:#333232;border-bottom:1px solid #4a4948;border-right:1px solid #4a4948"></div>
<div class="b" style="left:2279px;top:1280px;width:251px;height:22px;background:#3a3a3a"></div>
<div class="t" style="left:2232.3px;top:1284.2px;font-size:13.5px;line-height:13.5px;color:#e8e8e8;font-weight:normal;font-family:'Liberation Sans', sans-serif;">38</div>
<div class="t" style="left:2281.9px;top:1284.7px;font-size:11.8px;line-height:11.8px;color:#ececec;font-weight:normal;font-family:'Liberation Sans', sans-serif;">;V32.7c : In gosub Config kann Werkzeugl…</div>
<div class="b" style="left:2227px;top:1302px;width:51px;height:22px;background:#333232;border-bottom:1px solid #4a4948;border-right:1px solid #4a4948"></div>
<div class="b" style="left:2279px;top:1302px;width:251px;height:22px;background:#1f1e1e"></div>
<div class="t" style="left:2232.3px;top:1306.2px;font-size:13.5px;line-height:13.5px;color:#e8e8e8;font-weight:normal;font-family:'Liberation Sans', sans-serif;">39</div>
<div class="t" style="left:2281.9px;top:1306.7px;font-size:11.8px;line-height:11.8px;color:#ececec;font-weight:normal;font-family:'Liberation Sans', sans-serif;">;V32.7a : WZ-Nr. wird bei Entnahme angeze…</div>
<div class="b" style="left:2227px;top:1324px;width:51px;height:22px;background:#333232;border-bottom:1px solid #4a4948;border-right:1px solid #4a4948"></div>
<div class="b" style="left:2279px;top:1324px;width:251px;height:22px;background:#3a3a3a"></div>
<div class="t" style="left:2232.3px;top:1328.2px;font-size:13.5px;line-height:13.5px;color:#e8e8e8;font-weight:normal;font-family:'Liberation Sans', sans-serif;">40</div>
<div class="t" style="left:2281.9px;top:1328.7px;font-size:11.8px;line-height:11.8px;color:#ececec;font-weight:normal;font-family:'Liberation Sans', sans-serif;">;V32.7  : <span class="q"><b>?</b></span>nderungen Laserimage und Diep…</div>
<div class="b" style="left:2227px;top:1346px;width:51px;height:22px;background:#333232;border-bottom:1px solid #4a4948;border-right:1px solid #4a4948"></div>
<div class="b" style="left:2279px;top:1346px;width:251px;height:22px;background:#1f1e1e"></div>
<div class="t" style="left:2232.3px;top:1350.2px;font-size:13.5px;line-height:13.5px;color:#e8e8e8;font-weight:normal;font-family:'Liberation Sans', sans-serif;">41</div>
<div class="t" style="left:2281.9px;top:1350.7px;font-size:11.8px;line-height:11.8px;color:#ececec;font-weight:normal;font-family:'Liberation Sans', sans-serif;">;V32.6    : 3D-finder V3.6 Antastgeschwindi…</div>
<div class="b" style="left:2227px;top:1368px;width:51px;height:6px;background:#333232;border-bottom:1px solid #4a4948;border-right:1px solid #4a4948"></div>
<div class="b" style="left:2279px;top:1368px;width:251px;height:6px;background:#3a3a3a"></div>
<div class="b" style="left:2530px;top:466px;width:25px;height:908px;background:#3a3a3a"></div>
<div class="b" style="left:2530px;top:466px;width:25px;height:22px;background:#353433;border:1px solid #454443"></div>
<svg class="b" style="left:2530px;top:466px" width="25" height="22"><path d="M5 16.8L12.5 9.3L20 16.8" stroke="#9a90a8" stroke-width="3" fill="none"/></svg>
<div class="b" style="left:2531px;top:488px;width:23px;height:24px;background:#3a3a3a;border:1px solid #444"></div>
<div class="b" style="left:2530px;top:512px;width:25px;height:839px;background-image:repeating-conic-gradient(#b8b8b8 0% 25%, #6a6a6a 0% 50%);background-size:2px 2px"></div>
<div class="b" style="left:2530px;top:1351px;width:25px;height:23px;background:#353433;border:1px solid #454443"></div>
<svg class="b" style="left:2530px;top:1351px" width="25" height="23"><path d="M5 5.8L12.5 13.3L20 5.8" stroke="#9a90a8" stroke-width="3" fill="none"/></svg>
<div class="t" style="left:2226.0px;top:1389.4px;font-size:12px;line-height:12px;color:#e6e6e6;font-weight:normal;font-family:'Liberation Sans', sans-serif;">Line #</div>
<div class="t" style="left:2226.0px;top:1425.4px;font-size:12px;line-height:12px;color:#e6e6e6;font-weight:normal;font-family:'Liberation Sans', sans-serif;">M6 T#</div>
<div class="b" style="left:2290px;top:1384px;width:43px;height:24px;background:#1e1d1d;border-radius:2px"></div>
<div class="t" style="left:2295.0px;top:1389.4px;font-size:12px;line-height:12px;color:#e6e6e6;font-weight:normal;font-family:'Liberation Sans', sans-serif;">0</div>
<div class="b" style="left:2337px;top:1381px;width:74px;height:30px;background:#4a4948;border-radius:3px"></div>
<div class="b" style="left:2492px;top:1381px;width:63px;height:30px;background:#333232;border:1px solid #3f3e3d;border-radius:3px"></div>
<div class="b" style="left:2290px;top:1420px;width:43px;height:24px;background:#1e1d1d;border-radius:2px"></div>
<div class="t" style="left:2295.0px;top:1425.4px;font-size:12px;line-height:12px;color:#e6e6e6;font-weight:normal;font-family:'Liberation Sans', sans-serif;">0</div>
<div class="b" style="left:2337px;top:1417px;width:74px;height:30px;background:#4a4948;border-radius:3px"></div>
<div class="b" style="left:2492px;top:1417px;width:63px;height:30px;background:#333232;border:1px solid #3f3e3d;border-radius:3px"></div>
<div class="t" style="left:2337.0px;top:1389.4px;font-size:12px;line-height:12px;color:#a8a8a8;font-weight:normal;font-family:'Liberation Sans', sans-serif;width:74px;text-align:center">Go to line #</div>
<div class="t" style="left:2337.0px;top:1425.4px;font-size:12px;line-height:12px;color:#a8a8a8;font-weight:normal;font-family:'Liberation Sans', sans-serif;width:74px;text-align:center">Go to M6 T#</div>
<div class="t" style="left:2492.0px;top:1390.4px;font-size:12px;line-height:12px;color:#f0f0f0;font-weight:normal;font-family:'Liberation Sans', sans-serif;width:63px;text-align:center">Reload file</div>
<div class="t" style="left:2492.0px;top:1426.4px;font-size:12px;line-height:12px;color:#f0f0f0;font-weight:normal;font-family:'Liberation Sans', sans-serif;width:63px;text-align:center">Edit file</div>
<svg class="b" style="left:2330px;top:1455px" width="229" height="84" viewBox="2330 1455 229 84">
<text x="2338" y="1523" font-family="Liberation Sans" font-weight="bold" font-size="34" fill="#2c56c4" letter-spacing="-1">Eding</text>
<text x="2371" y="1535.5" font-family="Liberation Sans" font-size="15" fill="#c8303a" letter-spacing="0.5">CNC</text>
<g transform="rotate(-15 2458 1493.5)"><rect x="2435.4" y="1470.9" width="45.2" height="45.2" rx="2.5" fill="#2c56c4"/>
<circle cx="2458" cy="1493.5" r="14.2" fill="#363534"/>
<path d="M2458 1470.9v8M2458 1508v8M2435.4 1493.5h8M2472.6 1493.5h8" stroke="#363534" stroke-width="1.8"/></g>
<circle cx="2458" cy="1493.5" r="3.8" fill="#e02a36"/></svg>
<div class="b" style="left:0px;top:0px;width:2559px;height:34px;background:#eff2f9"></div>
<svg class="b" style="left:0;top:0" width="34" height="34" viewBox="0 0 34 34">
<g transform="rotate(-15 14.15 16.6)"><rect x="5.15" y="7.6" width="18" height="18" rx="1.6" fill="#244a9c"/>
<circle cx="14.15" cy="16.6" r="6" fill="#eff2f9"/>
<path d="M14.15 7.6v3.6M14.15 22v3.6M5.15 16.6h3.6M19.55 16.6h3.6" stroke="#eff2f9" stroke-width="0.9"/></g>
<circle cx="13.75" cy="16.7" r="1.4" fill="#c0303a"/></svg>
<div class="t" style="left:35.5px;top:9.0px;font-size:17px;line-height:17px;color:#111;font-weight:normal;font-family:'Liberation Sans', sans-serif;">CNC V5.3 / SIMULATION</div>
<div class="t" style="left:275.0px;top:9.0px;font-size:17px;line-height:17px;color:#111;font-weight:normal;font-family:'Liberation Sans', sans-serif;">C:/EdingCNC5.3/config\macro.cnc</div>
<div class="b" style="left:2376px;top:16px;width:15px;height:1px;background:#222"></div>
<svg class="b" style="left:2440px;top:4px" width="26" height="26" viewBox="0 0 26 26">
<rect x="5.5" y="8.5" width="10.5" height="11" rx="2" fill="none" stroke="#1a1a1a" stroke-width="1.3"/>
<path d="M8.2 5.6h6.3a4 4 0 0 1 4 4v6.6" fill="none" stroke="#1a1a1a" stroke-width="1.3"/></svg>
<svg class="b" style="left:2510px;top:3px" width="28" height="28" viewBox="0 0 28 28">
<path d="M6 6L21 21M21 6L6 21" stroke="#1a1a1a" stroke-width="1.2"/></svg>
<div class="b" style="left:0px;top:34px;width:2559px;height:27px;background:#363432"></div>
<div class="b" style="left:0px;top:34px;width:909px;height:27px;background:linear-gradient(#323232 0%,#3c3c3c 100%)"></div>
<div class="b" style="left:0px;top:61px;width:2559px;height:6px;background:#373635"></div>
<div class="b" style="left:0px;top:34px;width:101px;height:27px;background:#474747"></div>
<div class="b" style="left:0px;top:34px;width:101px;height:3px;background:#c0202c"></div>
<div class="b" style="left:101px;top:35px;width:1px;height:25px;background:#454545"></div>
<div class="b" style="left:202px;top:35px;width:1px;height:25px;background:#454545"></div>
<div class="b" style="left:303px;top:35px;width:1px;height:25px;background:#454545"></div>
<div class="b" style="left:404px;top:35px;width:1px;height:25px;background:#454545"></div>
<div class="b" style="left:505px;top:35px;width:1px;height:25px;background:#454545"></div>
<div class="b" style="left:606px;top:35px;width:1px;height:25px;background:#454545"></div>
<div class="b" style="left:707px;top:35px;width:1px;height:25px;background:#454545"></div>
<div class="b" style="left:808px;top:35px;width:1px;height:25px;background:#454545"></div>
<div class="b" style="left:909px;top:35px;width:1px;height:25px;background:#454545"></div>
<div class="t" style="left:0.0px;top:42.7px;font-size:12.2px;line-height:12.2px;color:#e8e8e8;font-weight:normal;font-family:'Liberation Sans', sans-serif;width:101px;text-align:center">Operate</div>
<div class="t" style="left:101.0px;top:42.2px;font-size:12.2px;line-height:12.2px;color:#e8e8e8;font-weight:normal;font-family:'Liberation Sans', sans-serif;width:101px;text-align:center">Coordinates</div>
<div class="t" style="left:202.0px;top:42.2px;font-size:12.2px;line-height:12.2px;color:#e8e8e8;font-weight:normal;font-family:'Liberation Sans', sans-serif;width:101px;text-align:center">Program</div>
<div class="t" style="left:303.0px;top:42.2px;font-size:12.2px;line-height:12.2px;color:#e8e8e8;font-weight:normal;font-family:'Liberation Sans', sans-serif;width:101px;text-align:center">Tools</div>
<div class="t" style="left:404.0px;top:42.2px;font-size:12.2px;line-height:12.2px;color:#e8e8e8;font-weight:normal;font-family:'Liberation Sans', sans-serif;width:101px;text-align:center">Variables</div>
<div class="t" style="left:505.0px;top:42.2px;font-size:12.2px;line-height:12.2px;color:#e8e8e8;font-weight:normal;font-family:'Liberation Sans', sans-serif;width:101px;text-align:center">IO</div>
<div class="t" style="left:606.0px;top:42.2px;font-size:12.2px;line-height:12.2px;color:#e8e8e8;font-weight:normal;font-family:'Liberation Sans', sans-serif;width:101px;text-align:center">Service</div>
<div class="t" style="left:707.0px;top:42.2px;font-size:12.2px;line-height:12.2px;color:#e8e8e8;font-weight:normal;font-family:'Liberation Sans', sans-serif;width:101px;text-align:center">Setup</div>
<div class="t" style="left:808.0px;top:42.2px;font-size:12.2px;line-height:12.2px;color:#e8e8e8;font-weight:normal;font-family:'Liberation Sans', sans-serif;width:101px;text-align:center">Help</div>
</body></html>
